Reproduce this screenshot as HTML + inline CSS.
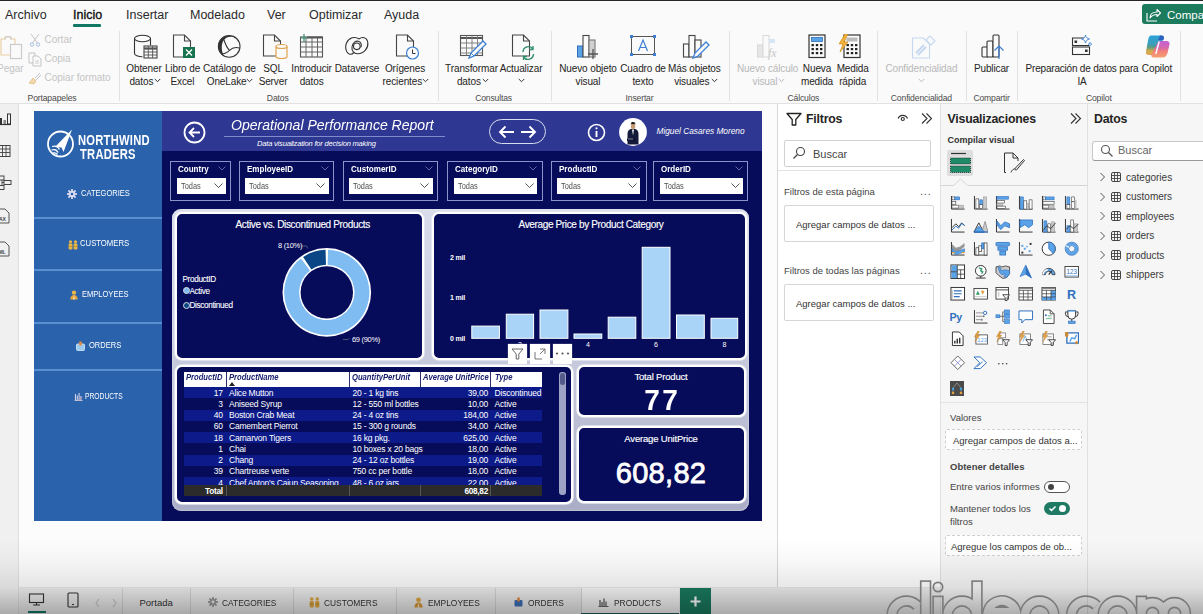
<!DOCTYPE html>
<html><head><meta charset="utf-8">
<style>
*{box-sizing:border-box;margin:0;padding:0}
html,body{width:1203px;height:614px;overflow:hidden;background:#fcfcfc;font-family:"Liberation Sans",sans-serif;color:#252423}
.a{position:absolute}
.t{position:absolute;white-space:nowrap;line-height:1}
#topline{left:0;top:0;width:1203px;height:1.4px;background:#262626}
#menu{left:0;top:2px;width:1203px;height:26px;background:#fafafa}
.mi{font-size:12.5px;color:#2a2a2a;top:6.5px}
#ribbon{left:0;top:28px;width:1203px;height:76px;background:#fafafa;border-bottom:1px solid #e1e1e1}
.rl{font-size:10.5px;color:#252423;text-align:center;line-height:13px}
.gl{font-size:9.5px;color:#444;top:93px}
.sep{width:1px;background:#e0e0e0;top:33px;height:70px}
.dis{color:#bdbdbd}
/* report */
#report{left:34px;top:111px;width:728px;height:410px;background:#060c5a;overflow:hidden}
#side{left:0;top:0;width:128px;height:410px;background:#2a62ac}
.navsep{left:0;width:128px;height:2px;background:#5a8fd2}
.nav{font-size:10px;color:#fff;left:0;width:128px;text-align:center}
#hdr{left:128px;top:0;width:600px;height:40px;background:#2e3592}
</style></head><body>
<div class="a" id="topline"></div>
<div class="a" id="menu">
  <div class="t mi" style="left:5px">Archivo</div>
  <div class="t mi" style="left:73px;color:#111;-webkit-text-stroke:0.35px #111">Inicio</div>
  <div class="a" style="left:73px;top:22px;width:28px;height:3px;background:#117865;border-radius:1px"></div>
  <div class="t mi" style="left:126px">Insertar</div>
  <div class="t mi" style="left:190px">Modelado</div>
  <div class="t mi" style="left:267px">Ver</div>
  <div class="t mi" style="left:309px">Optimizar</div>
  <div class="t mi" style="left:384px">Ayuda</div>
  <div class="a" style="left:1142px;top:2px;width:70px;height:20px;background:#1c7a5d;border-radius:3px"></div>
  <svg class="a" style="left:1146px;top:6px" width="15" height="14" viewBox="0 0 15 14"><path d="M1 5v8h10" fill="none" stroke="#fff" stroke-width="1.1"/><path d="M4 10c0-4 3-6 7-6V1.5l3.5 3.5L11 8.5V6.5c-3 0-5 1-7 3.5z" fill="none" stroke="#fff" stroke-width="1.1" stroke-linejoin="round"/></svg>
<div class="t" style="left:1167px;top:7.5px;font-size:11.5px;color:#fff">Compartir</div>
</div>
<div class="a" id="ribbon"></div>
<div class="a" style="left:118.5px;top:31px;width:1px;height:70px;background:#e1e1e1"></div>
<div class="a" style="left:437.8px;top:31px;width:1px;height:70px;background:#e1e1e1"></div>
<div class="a" style="left:550.5px;top:31px;width:1px;height:70px;background:#e1e1e1"></div>
<div class="a" style="left:729.3px;top:31px;width:1px;height:70px;background:#e1e1e1"></div>
<div class="a" style="left:877.4px;top:31px;width:1px;height:70px;background:#e1e1e1"></div>
<div class="a" style="left:965.7px;top:31px;width:1px;height:70px;background:#e1e1e1"></div>
<div class="a" style="left:1016.6px;top:31px;width:1px;height:70px;background:#e1e1e1"></div>
<div class="a" style="left:1180.2px;top:31px;width:1px;height:70px;background:#e1e1e1"></div>
<div class="t" style="left:2px;width:100px;text-align:center;top:93.8px;font-size:8.6px;letter-spacing:-0.15px;color:#4a4a4a">Portapapeles</div>
<div class="t" style="left:227.7px;width:100px;text-align:center;top:93.8px;font-size:8.6px;letter-spacing:-0.15px;color:#4a4a4a">Datos</div>
<div class="t" style="left:443.6px;width:100px;text-align:center;top:93.8px;font-size:8.6px;letter-spacing:-0.15px;color:#4a4a4a">Consultas</div>
<div class="t" style="left:589.5px;width:100px;text-align:center;top:93.8px;font-size:8.6px;letter-spacing:-0.15px;color:#4a4a4a">Insertar</div>
<div class="t" style="left:753.4px;width:100px;text-align:center;top:93.8px;font-size:8.6px;letter-spacing:-0.15px;color:#4a4a4a">Cálculos</div>
<div class="t" style="left:871.4px;width:100px;text-align:center;top:93.8px;font-size:8.6px;letter-spacing:-0.15px;color:#4a4a4a">Confidencialidad</div>
<div class="t" style="left:941.6px;width:100px;text-align:center;top:93.8px;font-size:8.6px;letter-spacing:-0.15px;color:#4a4a4a">Compartir</div>
<div class="t" style="left:1048.8px;width:100px;text-align:center;top:93.8px;font-size:8.6px;letter-spacing:-0.15px;color:#4a4a4a">Copilot</div>
<svg class="a" style="left:0;top:34px" width="24" height="27" viewBox="0 0 24 27"><path d="M1 5h4v-2h6v2h4v16H1z" fill="none" stroke="#e9cfa6" stroke-width="1.2"/><path d="M5 5.5a3 3 0 0 1 6 0" fill="none" stroke="#ccc" stroke-width="1.2"/><rect x="10.5" y="10.5" width="11" height="14" fill="#fafafa" stroke="#ccc" stroke-width="1.2"/></svg>
<div class="t" style="left:-3px;top:63.5px;font-size:10px;color:#c4c4c4">Pegar</div>
<svg class="a" style="left:29px;top:33px" width="12" height="14" viewBox="0 0 12 14"><path d="M2 1l6.5 9M10 1L3.5 10" stroke="#c4c4c4" stroke-width="1"/><circle cx="3" cy="11.5" r="1.7" fill="none" stroke="#a8bde0" stroke-width="1"/><circle cx="9" cy="11.5" r="1.7" fill="none" stroke="#a8bde0" stroke-width="1"/></svg>
<div class="t" style="left:44.5px;top:34.5px;font-size:10px;color:#c4c4c4">Cortar</div>
<svg class="a" style="left:28px;top:52px" width="14" height="15" viewBox="0 0 14 15"><path d="M1 1h6l0 0v10H1z" fill="none" stroke="#c4c4c4" stroke-width="1"/><path d="M5 4h5l3 3v7H5z" fill="#fafafa" stroke="#c4c4c4" stroke-width="1"/><path d="M7 9h4M7 11h4" stroke="#c4c4c4" stroke-width="0.8"/></svg>
<div class="t" style="left:44.5px;top:54px;font-size:10px;color:#c4c4c4">Copia</div>
<svg class="a" style="left:28px;top:71px" width="14" height="14" viewBox="0 0 14 14"><path d="M1 12l4-5 3 3-2 3z" fill="#f1d7ad" stroke="#e5c089" stroke-width="0.8"/><path d="M7 7l5-5M8 9l5-5" stroke="#c4c4c4" stroke-width="1"/></svg>
<div class="t" style="left:44.5px;top:73px;font-size:10px;color:#c4c4c4">Copiar formato</div>
<svg class="a" style="left:133px;top:34px" width="26" height="26" viewBox="0 0 26 26"><ellipse cx="9.5" cy="4.5" rx="8" ry="3.2" fill="none" stroke="#333" stroke-width="1.1"/><path d="M1.5 4.5v15c0 1.8 3.6 3.2 8 3.2" fill="none" stroke="#333" stroke-width="1.1"/><path d="M17.5 4.5v7" stroke="#333" stroke-width="1.1"/><rect x="11" y="12" width="13" height="12" fill="#fafafa" stroke="#444" stroke-width="1.1"/><path d="M11 14.5h13" stroke="#555" stroke-width="2.2"/><path d="M11 18h13M11 21h13M15.3 12v12M19.6 12v12" stroke="#555" stroke-width="0.9"/></svg>
<div class="t" style="left:84px;width:120px;text-align:center;top:63.5px;font-size:10px;letter-spacing:-0.12px;color:#252423">Obtener</div>
<div class="t" style="left:84px;width:120px;text-align:center;top:76.5px;font-size:10px;letter-spacing:-0.12px;color:#252423">datos&nbsp;&nbsp;</div>
<svg class="a" style="left:154px;top:78px" width="7" height="5" viewBox="0 0 7 5"><path d="M0.8 1l2.7 2.7L6.2 1" fill="none" stroke="#333" stroke-width="1"/></svg>
<svg class="a" style="left:172px;top:34px" width="26" height="26" viewBox="0 0 26 26"><path d="M1.5 1h11l6 6v16H1.5z" fill="#fafafa" stroke="#444" stroke-width="1.1"/><path d="M12.5 1v6h6" fill="none" stroke="#444" stroke-width="1.1"/><rect x="11" y="13" width="12" height="11" fill="#17744f"/><path d="M14 15.5l6 6M20 15.5l-6 6" stroke="#fff" stroke-width="1.4"/></svg>
<div class="t" style="left:122.5px;width:120px;text-align:center;top:63.5px;font-size:10px;letter-spacing:-0.12px;color:#252423">Libro de</div>
<div class="t" style="left:122.5px;width:120px;text-align:center;top:76.5px;font-size:10px;letter-spacing:-0.12px;color:#252423">Excel</div>
<svg class="a" style="left:217px;top:34px" width="25" height="25" viewBox="0 0 25 25"><circle cx="12.2" cy="12.4" r="10.8" fill="none" stroke="#333" stroke-width="1.1"/><path d="M6 3.8C2 6 0.8 10 1.5 14c0.8 4 3 6.5 5 7.5C4.5 17 4 10.5 6.5 6.5 8.5 3.5 11.5 2.2 15 2.8 12.8 0.8 8.8 1.5 6 3.8z" fill="#333"/><path d="M6.8 5.5C8.3 10 10 14 12.5 16.3c2.5-2.5 6-3.5 10-2.3M4.5 19.8c3 0 6-1.5 8-3.5" fill="none" stroke="#333" stroke-width="1.1"/></svg>
<div class="t" style="left:169.3px;width:120px;text-align:center;top:63.5px;font-size:10px;letter-spacing:-0.12px;color:#252423">Catálogo de</div>
<div class="t" style="left:169.3px;width:120px;text-align:center;top:76.5px;font-size:10px;letter-spacing:-0.12px;color:#252423">OneLake&nbsp;&nbsp;</div>
<svg class="a" style="left:246px;top:78px" width="7" height="5" viewBox="0 0 7 5"><path d="M0.8 1l2.7 2.7L6.2 1" fill="none" stroke="#333" stroke-width="1"/></svg>
<svg class="a" style="left:262px;top:34px" width="26" height="26" viewBox="0 0 26 26"><path d="M1.5 1h11l6 6v15H1.5z" fill="#fafafa" stroke="#444" stroke-width="1.1"/><path d="M12.5 1v6h6" fill="none" stroke="#444" stroke-width="1.1"/><path d="M14 12.5v10c0 1.2 2 2 5.5 2s5.5-0.8 5.5-2v-10" fill="#fafafa" stroke="#e0a34e" stroke-width="1.2"/><ellipse cx="19.5" cy="12.5" rx="5.5" ry="2" fill="#fafafa" stroke="#e0a34e" stroke-width="1.2"/></svg>
<div class="t" style="left:213px;width:120px;text-align:center;top:63.5px;font-size:10px;letter-spacing:-0.12px;color:#252423">SQL</div>
<div class="t" style="left:213px;width:120px;text-align:center;top:76.5px;font-size:10px;letter-spacing:-0.12px;color:#252423">Server</div>
<svg class="a" style="left:299px;top:34px" width="26" height="25" viewBox="0 0 26 25"><rect x="1.5" y="3" width="22" height="20" fill="none" stroke="#555" stroke-width="1.1"/><path d="M1.5 8h22M1.5 13h22M1.5 18h22M7 3v20M13 3v20M18.5 3v20" stroke="#666" stroke-width="1"/><path d="M8 3.5h15.5" stroke="#555" stroke-width="2"/><path d="M5 0v8M1 4h8" stroke="#3b8a6e" stroke-width="1.2"/></svg>
<div class="t" style="left:251.60000000000002px;width:120px;text-align:center;top:63.5px;font-size:10px;letter-spacing:-0.12px;color:#252423">Introducir</div>
<div class="t" style="left:251.60000000000002px;width:120px;text-align:center;top:76.5px;font-size:10px;letter-spacing:-0.12px;color:#252423">datos</div>
<svg class="a" style="left:345px;top:36px" width="25" height="20" viewBox="0 0 25 20"><path d="M14 3C10 0 4 1.5 1.5 7-0.5 12 1.5 18 5.5 18.3 7 18.5 8 17.5 9 16.5" fill="none" stroke="#333" stroke-width="1.1"/><path d="M14 3c3-2.5 8-2 8.8 3.5 0.7 5.5-3.8 11-9.8 11.3-4 0.2-6.5-2.8-6-6.8 0.5-4.5 4-6.5 6.5-5.7 2.5 0.7 3.8 3.7 2 6.2" fill="none" stroke="#333" stroke-width="1.1"/><circle cx="11.8" cy="10.3" r="3.3" fill="none" stroke="#333" stroke-width="1.1"/></svg>
<div class="t" style="left:297px;width:120px;text-align:center;top:63.5px;font-size:10px;letter-spacing:-0.12px;color:#252423">Dataverse</div>
<svg class="a" style="left:395px;top:34px" width="26" height="27" viewBox="0 0 26 27"><path d="M1.5 1h11l6 6v15H1.5z" fill="#fafafa" stroke="#444" stroke-width="1.1"/><path d="M12.5 1v6h6" fill="none" stroke="#444" stroke-width="1.1"/><circle cx="17.5" cy="19" r="6" fill="#fafafa" stroke="#3c7fd4" stroke-width="1.2"/><path d="M17.5 15.5v4h3" fill="none" stroke="#333" stroke-width="1"/></svg>
<div class="t" style="left:345px;width:120px;text-align:center;top:63.5px;font-size:10px;letter-spacing:-0.12px;color:#252423">Orígenes</div>
<div class="t" style="left:345px;width:120px;text-align:center;top:76.5px;font-size:10px;letter-spacing:-0.12px;color:#252423">recientes&nbsp;&nbsp;</div>
<svg class="a" style="left:422px;top:78px" width="7" height="5" viewBox="0 0 7 5"><path d="M0.8 1l2.7 2.7L6.2 1" fill="none" stroke="#333" stroke-width="1"/></svg>
<svg class="a" style="left:459px;top:34px" width="28" height="26" viewBox="0 0 28 26"><rect x="1.5" y="1.5" width="22" height="20" fill="none" stroke="#555" stroke-width="1.1"/><path d="M1.5 4h22" stroke="#555" stroke-width="2"/><path d="M1.5 9h22M1.5 14h22M1.5 19h22M7.5 1.5v20M13 1.5v20M18.5 1.5v20" stroke="#777" stroke-width="0.9"/><path d="M10 24l2-5 12-12 3 3-12 12z" fill="#fafafa" stroke="#3c7fd4" stroke-width="1.3"/><path d="M12 19l3 3" stroke="#3c7fd4" stroke-width="1"/></svg>
<div class="t" style="left:411.5px;width:120px;text-align:center;top:63.5px;font-size:10px;letter-spacing:-0.12px;color:#252423">Transformar</div>
<div class="t" style="left:411.5px;width:120px;text-align:center;top:76.5px;font-size:10px;letter-spacing:-0.12px;color:#252423">datos&nbsp;&nbsp;</div>
<svg class="a" style="left:482px;top:78px" width="7" height="5" viewBox="0 0 7 5"><path d="M0.8 1l2.7 2.7L6.2 1" fill="none" stroke="#333" stroke-width="1"/></svg>
<svg class="a" style="left:511px;top:34px" width="26" height="27" viewBox="0 0 26 27"><path d="M1.5 1h11l6 6v15H1.5z" fill="#fafafa" stroke="#444" stroke-width="1.1"/><path d="M12.5 1v6h6" fill="none" stroke="#444" stroke-width="1.1"/><path d="M12 18a5.5 5.5 0 0 1 10-3M22.5 20a5.5 5.5 0 0 1-10 3" fill="none" stroke="#2f8f6a" stroke-width="1.4"/><path d="M22 12v3.5h-3.5M12.5 26v-3.5H16" fill="none" stroke="#2f8f6a" stroke-width="1.3"/></svg>
<div class="t" style="left:461px;width:120px;text-align:center;top:63.5px;font-size:10px;letter-spacing:-0.12px;color:#252423">Actualizar</div>
<svg class="a" style="left:518px;top:78px" width="7" height="5" viewBox="0 0 7 5"><path d="M0.8 1l2.7 2.7L6.2 1" fill="none" stroke="#333" stroke-width="1"/></svg>
<svg class="a" style="left:576px;top:34px" width="26" height="26" viewBox="0 0 26 26"><rect x="1.5" y="12" width="5.5" height="11" fill="#5aa2e6" stroke="#2f6fbd" stroke-width="1"/><rect x="7" y="1.5" width="6" height="21.5" fill="#fafafa" stroke="#444" stroke-width="1.1"/><rect x="13" y="6" width="6" height="17" fill="#d0d0d0" stroke="#777" stroke-width="1.1"/><path d="M17 15v10M12 20h10" stroke="#555" stroke-width="1.3"/></svg>
<div class="t" style="left:528px;width:120px;text-align:center;top:63.5px;font-size:10px;letter-spacing:-0.12px;color:#252423">Nuevo objeto</div>
<div class="t" style="left:528px;width:120px;text-align:center;top:76.5px;font-size:10px;letter-spacing:-0.12px;color:#252423">visual</div>
<svg class="a" style="left:629px;top:34px" width="28" height="23" viewBox="0 0 28 23"><rect x="2.5" y="2.5" width="23" height="18" fill="none" stroke="#555" stroke-width="1"/><rect x="1" y="1" width="3" height="3" fill="#3c7fd4"/><rect x="24" y="1" width="3" height="3" fill="#3c7fd4"/><rect x="1" y="19" width="3" height="3" fill="#3c7fd4"/><rect x="24" y="19" width="3" height="3" fill="#3c7fd4"/><path d="M9.5 17l4.5-11 4.5 11M11 13.5h6" fill="none" stroke="#3c7fd4" stroke-width="1.2"/></svg>
<div class="t" style="left:583px;width:120px;text-align:center;top:63.5px;font-size:10px;letter-spacing:-0.12px;color:#252423">Cuadro de</div>
<div class="t" style="left:583px;width:120px;text-align:center;top:76.5px;font-size:10px;letter-spacing:-0.12px;color:#252423">texto</div>
<svg class="a" style="left:682px;top:34px" width="28" height="26" viewBox="0 0 28 26"><rect x="1.5" y="10" width="5.5" height="13" fill="#fafafa" stroke="#444" stroke-width="1.1"/><rect x="7" y="1.5" width="6" height="21.5" fill="#fafafa" stroke="#444" stroke-width="1.1"/><rect x="13" y="6" width="6" height="17" fill="#fafafa" stroke="#444" stroke-width="1.1"/><path d="M11 24l2-5 11-11 3 3-11 11z" fill="#fafafa" stroke="#3c7fd4" stroke-width="1.3"/></svg>
<div class="t" style="left:634.4px;width:120px;text-align:center;top:63.5px;font-size:10px;letter-spacing:-0.12px;color:#252423">Más objetos</div>
<div class="t" style="left:634.4px;width:120px;text-align:center;top:76.5px;font-size:10px;letter-spacing:-0.12px;color:#252423">visuales&nbsp;&nbsp;</div>
<svg class="a" style="left:711px;top:78px" width="7" height="5" viewBox="0 0 7 5"><path d="M0.8 1l2.7 2.7L6.2 1" fill="none" stroke="#333" stroke-width="1"/></svg>
<svg class="a" style="left:756px;top:34px" width="26" height="26" viewBox="0 0 26 26"><rect x="1.5" y="11" width="5.5" height="12" fill="#e6e6e6" stroke="#d8d8d8" stroke-width="1"/><rect x="7" y="1.5" width="6" height="21.5" fill="#fafafa" stroke="#d8d8d8" stroke-width="1"/><rect x="13" y="5" width="6" height="4" fill="#d6e6f7"/><text x="12" y="23" font-family="Liberation Serif" font-style="italic" font-size="12" fill="#c8c8c8">fx</text></svg>
<div class="t" style="left:707.6px;width:120px;text-align:center;top:63.5px;font-size:10px;letter-spacing:-0.12px;color:#b8b8b8">Nuevo cálculo</div>
<div class="t" style="left:707.6px;width:120px;text-align:center;top:76.5px;font-size:10px;letter-spacing:-0.12px;color:#b8b8b8">visual&nbsp;&nbsp;</div>
<svg class="a" style="left:778px;top:78px" width="7" height="5" viewBox="0 0 7 5"><path d="M0.8 1l2.7 2.7L6.2 1" fill="none" stroke="#b8b8b8" stroke-width="1"/></svg>
<svg class="a" style="left:808px;top:34px" width="18" height="25" viewBox="0 0 18 25"><rect x="1" y="1" width="16" height="22.5" fill="#fafafa" stroke="#333" stroke-width="1.2"/><rect x="3.5" y="3.5" width="11" height="4" fill="#5aa2e6" stroke="#2f6fbd" stroke-width="0.8"/><g fill="#222"><rect x="3.5" y="10" width="2.4" height="2.2"/><rect x="7.8" y="10" width="2.4" height="2.2"/><rect x="12" y="10" width="2.4" height="2.2"/><rect x="3.5" y="14" width="2.4" height="2.2"/><rect x="7.8" y="14" width="2.4" height="2.2"/><rect x="12" y="14" width="2.4" height="2.2"/><rect x="3.5" y="18" width="2.4" height="2.2"/><rect x="7.8" y="18" width="2.4" height="2.2"/><rect x="12" y="18" width="2.4" height="2.2"/></g></svg>
<div class="t" style="left:757px;width:120px;text-align:center;top:63.5px;font-size:10px;letter-spacing:-0.12px;color:#252423">Nueva</div>
<div class="t" style="left:757px;width:120px;text-align:center;top:76.5px;font-size:10px;letter-spacing:-0.12px;color:#252423">medida</div>
<svg class="a" style="left:838px;top:34px" width="24" height="25" viewBox="0 0 24 25"><rect x="6" y="1" width="16" height="22.5" fill="#fafafa" stroke="#333" stroke-width="1.2"/><rect x="8.5" y="3.5" width="11" height="4" fill="#bbb"/><g fill="#222"><rect x="8.5" y="10" width="2.4" height="2.2"/><rect x="12.8" y="10" width="2.4" height="2.2"/><rect x="17" y="10" width="2.4" height="2.2"/><rect x="8.5" y="14" width="2.4" height="2.2"/><rect x="12.8" y="14" width="2.4" height="2.2"/><rect x="17" y="14" width="2.4" height="2.2"/><rect x="8.5" y="18" width="2.4" height="2.2"/><rect x="12.8" y="18" width="2.4" height="2.2"/><rect x="17" y="18" width="2.4" height="2.2"/></g><path d="M7 0L1 10h4l-3 8 8-10H6l4-8z" fill="#f0b23c" stroke="#d18e1a" stroke-width="0.7"/></svg>
<div class="t" style="left:792.7px;width:120px;text-align:center;top:63.5px;font-size:10px;letter-spacing:-0.12px;color:#252423">Medida</div>
<div class="t" style="left:792.7px;width:120px;text-align:center;top:76.5px;font-size:10px;letter-spacing:-0.12px;color:#252423">rápida</div>
<svg class="a" style="left:911px;top:34px" width="26" height="26" viewBox="0 0 26 26"><path d="M1.5 4h11l6 6v14H1.5z" fill="#fafafa" stroke="#c4d8ef" stroke-width="1.1"/><path d="M5 19l8-8M7 21l8-8" stroke="#c4d8ef" stroke-width="2"/><path d="M15 6l4-4 5 5-4 4z" fill="#fafafa" stroke="#c4d8ef" stroke-width="1.1"/></svg>
<div class="t" style="left:861.4px;width:120px;text-align:center;top:63.5px;font-size:10px;letter-spacing:-0.12px;color:#b8b8b8">Confidencialidad</div>
<svg class="a" style="left:918px;top:78px" width="7" height="5" viewBox="0 0 7 5"><path d="M0.8 1l2.7 2.7L6.2 1" fill="none" stroke="#b8b8b8" stroke-width="1"/></svg>
<svg class="a" style="left:981px;top:34px" width="25" height="26" viewBox="0 0 25 26"><rect x="1" y="13" width="6" height="10" rx="1" fill="#fafafa" stroke="#333" stroke-width="1.1"/><rect x="6" y="7" width="6" height="16" rx="1" fill="#fafafa" stroke="#333" stroke-width="1.1"/><rect x="12" y="1" width="6" height="22" rx="1" fill="#fafafa" stroke="#333" stroke-width="1.1"/><path d="M18 25V12M13.5 16.5l4.5-4.5 4.5 4.5" fill="none" stroke="#3c7fd4" stroke-width="1.2"/></svg>
<div class="t" style="left:931.5px;width:120px;text-align:center;top:63.5px;font-size:10px;letter-spacing:-0.12px;color:#252423">Publicar</div>
<svg class="a" style="left:1071px;top:34px" width="24" height="22" viewBox="0 0 24 22"><path d="M13 4H1.5v7.5H18" fill="none" stroke="#333" stroke-width="1.1"/><rect x="1.5" y="13" width="17" height="7.5" fill="none" stroke="#333" stroke-width="1.1"/><rect x="3.5" y="6.5" width="2.6" height="2.5" fill="#333"/><rect x="14" y="15.5" width="2.6" height="2.5" fill="#333"/><path d="M14.5 1c0.6 2.6 1.4 3.4 4 4-2.6 0.6-3.4 1.4-4 4-0.6-2.6-1.4-3.4-4-4 2.6-0.6 3.4-1.4 4-4z" fill="#fafafa" stroke="#3c7fd4" stroke-width="0.9"/><path d="M19 8.3c0.3 1.2 0.7 1.6 1.9 1.9-1.2 0.3-1.6 0.7-1.9 1.9-0.3-1.2-0.7-1.6-1.9-1.9 1.2-0.3 1.6-0.7 1.9-1.9z" fill="#fafafa" stroke="#3c7fd4" stroke-width="0.8"/></svg>
<div class="t" style="left:1022px;width:120px;text-align:center;top:63.5px;font-size:10px;letter-spacing:-0.2px;color:#252423">Preparación de datos para</div>
<div class="t" style="left:1022px;width:120px;text-align:center;top:76.5px;font-size:10px;letter-spacing:-0.12px;color:#252423">IA</div>
<svg class="a" style="left:1144.5px;top:35px" width="25" height="23" viewBox="0 0 25 23"><defs><linearGradient id="cp1" x1="0" y1="0" x2="0" y2="1"><stop offset="0" stop-color="#2aa3d8"/><stop offset="0.45" stop-color="#3c9fb8"/><stop offset="0.6" stop-color="#5a9a80"/><stop offset="0.8" stop-color="#d5ad4c"/><stop offset="1" stop-color="#e0a050"/></linearGradient><linearGradient id="cp2" x1="0" y1="0" x2="0" y2="1"><stop offset="0" stop-color="#c35fd6"/><stop offset="0.45" stop-color="#d86aa8"/><stop offset="0.6" stop-color="#f07f7a"/><stop offset="1" stop-color="#f5a070"/></linearGradient></defs>
<path d="M6 0.5h10c2 0 3 1.2 2.5 3L14 17c-0.7 2.2-2 3-4 3H4c-2.2 0-3.6-1.4-3-3.6L3 5.5C3.7 2 4.5 0.5 6 0.5z" fill="url(#cp1)"/>
<path d="M15 0.5h1.5c1.8 0 2.8 1 2.4 2.8L18.5 5H13z" fill="#2b62c0"/>
<path d="M13.5 6h8c2.2 0 3.5 1.4 3 3.6L22.5 18c-0.7 2.6-2.3 4.5-5 4.5H8.5c-2 0-2.6-1.6-2-3.2z" fill="url(#cp2)"/>
<path d="M14.2 6.5L10.8 19" stroke="#fff" stroke-width="1.4"/></svg>
<div class="t" style="left:1097px;width:120px;text-align:center;top:63.5px;font-size:10px;letter-spacing:-0.12px;color:#252423">Copilot</div>



<div class="a" style="left:34px;top:111px;width:728px;height:410px;background:#060c5a"></div>
<div class="a" style="left:34px;top:111px;width:128px;height:410px;background:#2a62ac"></div>
<div class="a" style="left:162px;top:111px;width:600px;height:39.8px;background:#2e3791"></div>
<!-- sidebar -->
<div class="a" style="left:34px;top:217px;width:128px;height:2px;background:#5a8fd2"></div>
<div class="a" style="left:34px;top:269px;width:128px;height:2px;background:#5a8fd2"></div>
<div class="a" style="left:34px;top:322px;width:128px;height:2px;background:#5a8fd2"></div>
<div class="a" style="left:34px;top:369px;width:128px;height:2px;background:#5a8fd2"></div>
<svg class="a" style="left:46px;top:128px" width="32" height="32" viewBox="0 0 32 32">
 <circle cx="14.5" cy="16" r="12.5" fill="none" stroke="#fff" stroke-width="1.8"/>
 <path d="M9 19 L26 1.5 L17.5 24 L15.5 19.5 Z" fill="#fff"/>
 <path d="M6 18.5c3-1 6 0 7.5 3M5.5 22c3-1 5.5 0 6.5 2.5M7 25c2-0.5 3.5 0.3 4.5 1.5" fill="none" stroke="#fff" stroke-width="1.3"/>
</svg>
<div class="t" style="left:77.5px;top:132.5px;font-size:14px;font-weight:bold;color:#fff;letter-spacing:0.3px;transform:scaleX(0.8);transform-origin:left">NORTHWIND</div>
<div class="t" style="left:79.5px;top:147px;font-size:14px;font-weight:bold;color:#fff;letter-spacing:0.3px;transform:scaleX(0.8);transform-origin:left">TRADERS</div>
<div class="t" style="left:80.5px;top:189px;font-size:9.3px;color:#fff;transform:scaleX(0.81);transform-origin:left">CATEGORIES</div>
<svg class="a" style="left:67px;top:189px" width="10" height="10" viewBox="0 0 10 10"><g fill="#dcdcf2"><circle cx="5" cy="5" r="3.2"/><rect x="4.1" y="0" width="1.8" height="2.2" transform="rotate(0 5 5)"/><rect x="4.1" y="0" width="1.8" height="2.2" transform="rotate(45 5 5)"/><rect x="4.1" y="0" width="1.8" height="2.2" transform="rotate(90 5 5)"/><rect x="4.1" y="0" width="1.8" height="2.2" transform="rotate(135 5 5)"/><rect x="4.1" y="0" width="1.8" height="2.2" transform="rotate(180 5 5)"/><rect x="4.1" y="0" width="1.8" height="2.2" transform="rotate(225 5 5)"/><rect x="4.1" y="0" width="1.8" height="2.2" transform="rotate(270 5 5)"/><rect x="4.1" y="0" width="1.8" height="2.2" transform="rotate(315 5 5)"/></g><circle cx="5" cy="5" r="1.3" fill="#2a62ac"/></svg>
<div class="t" style="left:80px;top:239px;font-size:9.3px;color:#fff;transform:scaleX(0.83);transform-origin:left">CUSTOMERS</div>
<svg class="a" style="left:67.5px;top:239.5px" width="10" height="10" viewBox="0 0 10 10"><g fill="#e9b748"><circle cx="2.5" cy="1.8" r="1.6"/><circle cx="7.5" cy="1.8" r="1.6"/><rect x="0.6" y="3.6" width="3.8" height="6" rx="1"/><rect x="5.6" y="3.6" width="3.8" height="6" rx="1"/></g><path d="M0.8 6.5h3.4M5.8 6.5h3.4" stroke="#a67a20" stroke-width="0.6"/></svg>
<div class="t" style="left:82px;top:290px;font-size:9.3px;color:#fff;transform:scaleX(0.81);transform-origin:left">EMPLOYEES</div>
<svg class="a" style="left:69.5px;top:290px" width="8" height="10" viewBox="0 0 8 10"><circle cx="4" cy="2.6" r="2.2" fill="#e9b748"/><path d="M0.3 9.5c0-3 1.5-4.5 3.7-4.5s3.7 1.5 3.7 4.5z" fill="#e9a53a"/><path d="M4 5l-0.6 4.5h1.2z" fill="#fff"/></svg>
<div class="t" style="left:89px;top:341px;font-size:9.3px;color:#fff;transform:scaleX(0.81);transform-origin:left">ORDERS</div>
<svg class="a" style="left:76px;top:340.5px" width="9" height="10" viewBox="0 0 9 10"><rect x="0.5" y="3" width="8" height="6.5" rx="1" fill="#9ccbf2" stroke="#d9ecfb" stroke-width="0.8"/><rect x="3.2" y="0.5" width="2.6" height="4" fill="#e58a3c"/></svg>
<div class="t" style="left:85.2px;top:391.5px;font-size:8.3px;color:#fff;transform:scaleX(0.81);transform-origin:left">PRODUCTS</div>
<svg class="a" style="left:73.5px;top:392px" width="9" height="9" viewBox="0 0 9 9"><path d="M0.5 8.5h8" stroke="#c8c8e0" stroke-width="0.9"/><path d="M1.5 8V2M3.3 8V3.5M5.1 8V1M6.9 8V4" stroke="#d0d0e6" stroke-width="1.1"/><path d="M4.5 8.5l4-3" stroke="#e58a8a" stroke-width="0.6"/></svg>
<!-- header -->
<svg class="a" style="left:183px;top:121px" width="23" height="23" viewBox="0 0 23 23"><circle cx="11.5" cy="11.5" r="10" fill="none" stroke="#fff" stroke-width="1.8"/><path d="M17 11.5H6.5M11 7l-4.5 4.5 4.5 4.5" fill="none" stroke="#fff" stroke-width="1.8"/></svg>
<div class="t" style="left:231px;top:116.5px;font-size:15.5px;font-style:italic;color:#fff;transform:scaleX(0.905);transform-origin:left">Operational Performance Report</div>
<div class="a" style="left:224px;top:136px;width:221px;height:1px;background:#7f8ccc"></div>
<div class="t" style="left:257px;top:140px;font-size:7.5px;font-style:italic;color:#fff;letter-spacing:-0.18px">Data visualization for decision making</div>
<div class="a" style="left:489px;top:119px;width:57px;height:25px;border:1.3px solid #d8dcf0;border-radius:13px"></div>
<svg class="a" style="left:497px;top:124px" width="42" height="16" viewBox="0 0 42 16"><path d="M17 8H3M8.5 2.5L3 8l5.5 5.5M24 8h14M32.5 2.5L38 8l-5.5 5.5" fill="none" stroke="#fff" stroke-width="1.9"/></svg>
<svg class="a" style="left:587px;top:123px" width="19" height="19" viewBox="0 0 19 19"><circle cx="9.5" cy="9.5" r="8" fill="none" stroke="#fff" stroke-width="1.6"/><path d="M9.5 8v6" stroke="#fff" stroke-width="1.9"/><circle cx="9.5" cy="5.3" r="1.1" fill="#fff"/></svg>
<svg class="a" style="left:619px;top:118.4px" width="28" height="28" viewBox="0 0 28 28"><circle cx="14" cy="14" r="13.9" fill="#fff"/><path d="M8.5 26.5V16c0-3 1.5-4.5 3.5-5h4c2 0.5 3.5 2 3.5 5v10.5z" fill="#141a3a"/><path d="M13 11.5l1 6 1-6z" fill="#f2f2f2"/><path d="M8 20.5h7l1.5 1.5-1.5 1H8z" fill="#0e1330"/><path d="M9 21h5" stroke="#ddd" stroke-width="0.6"/><rect x="12" y="5" width="4.2" height="6" rx="1.5" fill="#c79a72"/><path d="M11.7 6.8c0-2.3 1-2.8 2.4-2.8s2.4 0.6 2.4 2.8l-0.5-1c-1 0.5-2.5 0.5-3.8 0z" fill="#1c1c1c"/></svg>
<div class="t" style="left:656.5px;top:126.5px;font-size:8.3px;font-style:italic;color:#fff">Miguel Casares Moreno</div>
<div class="a" style="left:170px;top:161px;width:61px;height:40px;border:1px solid #8d93c9"></div>
<div class="t" style="left:178px;top:164.2px;font-size:9.8px;font-weight:bold;color:#fff;transform:scaleX(0.82);transform-origin:left">Country</div>
<svg class="a" style="left:218px;top:166px" width="8" height="5" viewBox="0 0 8 5"><path d="M0.5 0.5l3.5 3.5 3.5-3.5" fill="none" stroke="#6a70b0" stroke-width="0.9"/></svg>
<div class="a" style="left:177px;top:178px;width:49px;height:16px;background:#fff"></div>
<div class="t" style="left:181px;top:182px;font-size:8.6px;color:#505050;transform:scaleX(0.86);transform-origin:left">Todas</div>
<svg class="a" style="left:214px;top:183px" width="9" height="6" viewBox="0 0 9 6"><path d="M0.5 0.5l4 4 4-4" fill="none" stroke="#444" stroke-width="0.9"/></svg>
<div class="a" style="left:239px;top:161px;width:95px;height:40px;border:1px solid #8d93c9"></div>
<div class="t" style="left:247px;top:164.2px;font-size:9.8px;font-weight:bold;color:#fff;transform:scaleX(0.82);transform-origin:left">EmployeeID</div>
<svg class="a" style="left:321px;top:166px" width="8" height="5" viewBox="0 0 8 5"><path d="M0.5 0.5l3.5 3.5 3.5-3.5" fill="none" stroke="#6a70b0" stroke-width="0.9"/></svg>
<div class="a" style="left:245px;top:178px;width:84px;height:16px;background:#fff"></div>
<div class="t" style="left:249px;top:182px;font-size:8.6px;color:#505050;transform:scaleX(0.86);transform-origin:left">Todas</div>
<svg class="a" style="left:316px;top:183px" width="9" height="6" viewBox="0 0 9 6"><path d="M0.5 0.5l4 4 4-4" fill="none" stroke="#444" stroke-width="0.9"/></svg>
<div class="a" style="left:343px;top:161px;width:95px;height:40px;border:1px solid #8d93c9"></div>
<div class="t" style="left:351px;top:164.2px;font-size:9.8px;font-weight:bold;color:#fff;transform:scaleX(0.82);transform-origin:left">CustomerID</div>
<svg class="a" style="left:425px;top:166px" width="8" height="5" viewBox="0 0 8 5"><path d="M0.5 0.5l3.5 3.5 3.5-3.5" fill="none" stroke="#6a70b0" stroke-width="0.9"/></svg>
<div class="a" style="left:349px;top:178px;width:84px;height:16px;background:#fff"></div>
<div class="t" style="left:353px;top:182px;font-size:8.6px;color:#505050;transform:scaleX(0.86);transform-origin:left">Todas</div>
<svg class="a" style="left:420px;top:183px" width="9" height="6" viewBox="0 0 9 6"><path d="M0.5 0.5l4 4 4-4" fill="none" stroke="#444" stroke-width="0.9"/></svg>
<div class="a" style="left:447px;top:161px;width:96px;height:40px;border:1px solid #8d93c9"></div>
<div class="t" style="left:455px;top:164.2px;font-size:9.8px;font-weight:bold;color:#fff;transform:scaleX(0.82);transform-origin:left">CategoryID</div>
<svg class="a" style="left:529px;top:166px" width="8" height="5" viewBox="0 0 8 5"><path d="M0.5 0.5l3.5 3.5 3.5-3.5" fill="none" stroke="#6a70b0" stroke-width="0.9"/></svg>
<div class="a" style="left:454px;top:178px;width:83px;height:16px;background:#fff"></div>
<div class="t" style="left:458px;top:182px;font-size:8.6px;color:#505050;transform:scaleX(0.86);transform-origin:left">Todas</div>
<svg class="a" style="left:525px;top:183px" width="9" height="6" viewBox="0 0 9 6"><path d="M0.5 0.5l4 4 4-4" fill="none" stroke="#444" stroke-width="0.9"/></svg>
<div class="a" style="left:551px;top:161px;width:96px;height:40px;border:1px solid #8d93c9"></div>
<div class="t" style="left:559px;top:164.2px;font-size:9.8px;font-weight:bold;color:#fff;transform:scaleX(0.82);transform-origin:left">ProductID</div>
<svg class="a" style="left:633px;top:166px" width="8" height="5" viewBox="0 0 8 5"><path d="M0.5 0.5l3.5 3.5 3.5-3.5" fill="none" stroke="#6a70b0" stroke-width="0.9"/></svg>
<div class="a" style="left:557px;top:178px;width:83px;height:16px;background:#fff"></div>
<div class="t" style="left:561px;top:182px;font-size:8.6px;color:#505050;transform:scaleX(0.86);transform-origin:left">Todas</div>
<svg class="a" style="left:628px;top:183px" width="9" height="6" viewBox="0 0 9 6"><path d="M0.5 0.5l4 4 4-4" fill="none" stroke="#444" stroke-width="0.9"/></svg>
<div class="a" style="left:653px;top:161px;width:95px;height:40px;border:1px solid #8d93c9"></div>
<div class="t" style="left:661px;top:164.2px;font-size:9.8px;font-weight:bold;color:#fff;transform:scaleX(0.82);transform-origin:left">OrderID</div>
<svg class="a" style="left:735px;top:166px" width="8" height="5" viewBox="0 0 8 5"><path d="M0.5 0.5l3.5 3.5 3.5-3.5" fill="none" stroke="#6a70b0" stroke-width="0.9"/></svg>
<div class="a" style="left:660px;top:178px;width:83px;height:16px;background:#fff"></div>
<div class="t" style="left:664px;top:182px;font-size:8.6px;color:#505050;transform:scaleX(0.86);transform-origin:left">Todas</div>
<svg class="a" style="left:731px;top:183px" width="9" height="6" viewBox="0 0 9 6"><path d="M0.5 0.5l4 4 4-4" fill="none" stroke="#444" stroke-width="0.9"/></svg>
<div class="a" style="left:172px;top:208.5px;width:577px;height:302px;border-radius:9px;background:linear-gradient(to bottom,#d9dcea,#c3c6d9 60%,#a9adc5);box-shadow:inset 0 0 2px #eef0f8"></div>
<div class="a" style="left:174.8px;top:212px;width:249.39999999999998px;height:147.5px;border-radius:7px;border:2.3px solid #fff;background:#060c5a;box-shadow:0 0 0 0.8px #e8eaf4"></div>
<div class="a" style="left:432px;top:212px;width:315px;height:147.5px;border-radius:7px;border:2.3px solid #fff;background:#060c5a;box-shadow:0 0 0 0.8px #e8eaf4"></div>
<div class="a" style="left:174.5px;top:364.5px;width:398.5px;height:139.0px;border-radius:7px;border:2.3px solid #fff;background:#060c5a;box-shadow:0 0 0 0.8px #e8eaf4"></div>
<div class="a" style="left:576.5px;top:365.3px;width:169.79999999999995px;height:52.19999999999999px;border-radius:7px;border:2.3px solid #fff;background:#060c5a;box-shadow:0 0 0 0.8px #e8eaf4"></div>
<div class="a" style="left:576.5px;top:426.3px;width:169.79999999999995px;height:77.0px;border-radius:7px;border:2.3px solid #fff;background:#060c5a;box-shadow:0 0 0 0.8px #e8eaf4"></div>
<div class="t" style="left:235.5px;top:219.5px;font-size:10px;color:#fff;letter-spacing:-0.35px;-webkit-text-stroke:0.15px #fff">Active vs. Discontinued Products</div>
<div class="t" style="left:182.5px;top:275.8px;font-size:8.2px;color:#fff;letter-spacing:-0.35px;-webkit-text-stroke:0.1px #fff">ProductID</div>
<div class="a" style="left:183px;top:287.3px;width:6.8px;height:6.8px;border-radius:4px;background:#7fbaf0;border:1px solid #ddd"></div>
<div class="t" style="left:189.5px;top:287.8px;font-size:8.2px;color:#fff;letter-spacing:-0.35px;-webkit-text-stroke:0.1px #fff">Active</div>
<div class="a" style="left:183px;top:301.8px;width:6.8px;height:6.8px;border-radius:4px;background:#0a4585;border:1px solid #ddd"></div>
<div class="t" style="left:189.5px;top:302.3px;font-size:8.2px;color:#fff;letter-spacing:-0.35px;-webkit-text-stroke:0.1px #fff">Discontinued</div>
<svg class="a" style="left:0;top:0" width="440" height="370" viewBox="0 0 440 370"><circle cx="326.8" cy="292.4" r="44.3" fill="#fff"/><path d="M328.06 249.82A42.599999999999994 42.599999999999994 0 1 1 300.93 258.56L309.98 270.39A27.7 27.7 0 1 0 327.62 264.71Z" fill="#7fbcf2"/><path d="M303.10 257.00A42.599999999999994 42.599999999999994 0 0 1 325.54 249.82L325.98 264.71A27.7 27.7 0 0 0 311.39 269.38Z" fill="#0a4585"/><circle cx="326.8" cy="292.4" r="26.2" fill="#060c5a"/><path d="M301.5 246h5l1.5 2.5" fill="none" stroke="#888" stroke-width="0.6"/><path d="M343 339.5h5l1.5-1.5" fill="none" stroke="#888" stroke-width="0.6"/></svg>
<div class="t" style="left:278px;top:242px;font-size:7.5px;color:#fff;letter-spacing:-0.3px">8 (10%)</div>
<div class="t" style="left:352px;top:336px;font-size:7.5px;color:#fff;letter-spacing:-0.3px">69 (90%)</div>
<div class="t" style="left:518.5px;top:219.5px;font-size:10px;color:#fff;letter-spacing:-0.35px;-webkit-text-stroke:0.15px #fff">Average Price by Product Category</div>
<div class="t" style="left:450px;top:254.0px;font-size:7px;font-weight:bold;color:#fff;letter-spacing:-0.2px">2 mil</div>
<div class="t" style="left:450px;top:294.3px;font-size:7px;font-weight:bold;color:#fff;letter-spacing:-0.2px">1 mil</div>
<div class="t" style="left:450px;top:334.7px;font-size:7px;font-weight:bold;color:#fff;letter-spacing:-0.2px">0 mil</div>
<svg class="a" style="left:0;top:0" width="760" height="370" viewBox="0 0 760 370"><rect x="471.8" y="326.1" width="27.6" height="12.2" fill="#a9d3f7" stroke="#fff" stroke-width="1"/><rect x="506.3" y="314.2" width="27.3" height="24.1" fill="#a9d3f7" stroke="#fff" stroke-width="1"/><rect x="540.0" y="310.0" width="27.9" height="28.3" fill="#a9d3f7" stroke="#fff" stroke-width="1"/><rect x="574.0" y="334.0" width="27.8" height="4.3" fill="#a9d3f7" stroke="#fff" stroke-width="1"/><rect x="608.2" y="317.2" width="27.6" height="21.1" fill="#a9d3f7" stroke="#fff" stroke-width="1"/><rect x="642.2" y="247.3" width="27.8" height="91.0" fill="#a9d3f7" stroke="#fff" stroke-width="1"/><rect x="676.5" y="315.0" width="27.8" height="23.3" fill="#a9d3f7" stroke="#fff" stroke-width="1"/><rect x="711.0" y="318.3" width="26.7" height="20.0" fill="#a9d3f7" stroke="#fff" stroke-width="1"/></svg>
<div class="t" style="left:518.0px;top:341px;font-size:7px;color:#fff">2</div>
<div class="t" style="left:586.0px;top:341px;font-size:7px;color:#fff">4</div>
<div class="t" style="left:654.0px;top:341px;font-size:7px;color:#fff">6</div>
<div class="t" style="left:722.5px;top:341px;font-size:7px;color:#fff">8</div>
<div class="a" style="left:508px;top:344px;width:19px;height:20px;background:#fff;box-shadow:0 0 1px #bbb"></div>
<svg class="a" style="left:511px;top:348px" width="13" height="12" viewBox="0 0 13 12"><path d="M1 1h11l-4.2 5v5h-2.6v-5z" fill="none" stroke="#555" stroke-width="0.9"/></svg>
<div class="a" style="left:530px;top:344px;width:20px;height:20px;background:#fff;box-shadow:0 0 1px #bbb"></div>
<svg class="a" style="left:534px;top:348px" width="12" height="12" viewBox="0 0 12 12"><path d="M1 4v7h7M6 1h5v5M11 1L6 6" fill="none" stroke="#666" stroke-width="0.9"/></svg>
<div class="a" style="left:553px;top:344px;width:19px;height:20px;background:#fff;box-shadow:0 0 1px #bbb"></div>
<svg class="a" style="left:555px;top:352px" width="15" height="3" viewBox="0 0 15 3"><circle cx="2" cy="1.5" r="1.1" fill="#555"/><circle cx="7.5" cy="1.5" r="1.1" fill="#555"/><circle cx="13" cy="1.5" r="1.1" fill="#555"/></svg>
<div class="a" style="left:184px;top:372px;width:358px;height:15px;background:#fff"></div>
<div class="a" style="left:225.6px;top:372px;width:1px;height:123px;background:#2a3070"></div>
<div class="a" style="left:349.0px;top:372px;width:1px;height:123px;background:#2a3070"></div>
<div class="a" style="left:419.8px;top:372px;width:1px;height:123px;background:#2a3070"></div>
<div class="a" style="left:490.4px;top:372px;width:1px;height:123px;background:#2a3070"></div>
<div class="t" style="left:186.4px;top:373.2px;font-size:9.2px;font-style:italic;font-weight:bold;color:#1b2070;transform:scaleX(0.83);transform-origin:left">ProductID</div>
<div class="t" style="left:229.0px;top:373.2px;font-size:9.2px;font-style:italic;font-weight:bold;color:#1b2070;transform:scaleX(0.83);transform-origin:left">ProductName</div>
<div class="t" style="left:352.3px;top:373.2px;font-size:9.2px;font-style:italic;font-weight:bold;color:#1b2070;transform:scaleX(0.83);transform-origin:left">QuantityPerUnit</div>
<div class="t" style="left:422.9px;top:373.2px;font-size:9.2px;font-style:italic;font-weight:bold;color:#1b2070;transform:scaleX(0.83);transform-origin:left">Average UnitPrice</div>
<div class="t" style="left:494.5px;top:373.2px;font-size:9.2px;font-style:italic;font-weight:bold;color:#1b2070;transform:scaleX(0.83);transform-origin:left">Type</div>
<svg class="a" style="left:229px;top:382px" width="6" height="4" viewBox="0 0 6 4"><path d="M0 4L3 0l3 4z" fill="#222"/></svg>
<div class="a" style="left:184px;top:387px;width:358px;height:98px;overflow:hidden"><div class="a" style="left:0;top:0.00px;width:358px;height:11.25px;background:#0c1a8a"></div><div class="t" style="right:319.2px;top:1.60px;font-size:8.5px;color:#fff;letter-spacing:-0.2px">17</div><div class="t" style="left:45px;top:1.60px;font-size:8.5px;color:#fff;letter-spacing:-0.2px">Alice Mutton</div><div class="t" style="left:168.5px;top:1.60px;font-size:8.5px;color:#fff;letter-spacing:-0.2px">20 - 1 kg tins</div><div class="t" style="right:54.0px;top:1.60px;font-size:8.5px;color:#fff;letter-spacing:-0.2px">39,00</div><div class="t" style="left:310.5px;top:1.60px;font-size:8.5px;color:#fff;letter-spacing:-0.2px">Discontinued</div><div class="a" style="left:0;top:11.25px;width:358px;height:11.25px;background:#060c5a"></div><div class="t" style="right:319.2px;top:12.85px;font-size:8.5px;color:#fff;letter-spacing:-0.2px">3</div><div class="t" style="left:45px;top:12.85px;font-size:8.5px;color:#fff;letter-spacing:-0.2px">Aniseed Syrup</div><div class="t" style="left:168.5px;top:12.85px;font-size:8.5px;color:#fff;letter-spacing:-0.2px">12 - 550 ml bottles</div><div class="t" style="right:54.0px;top:12.85px;font-size:8.5px;color:#fff;letter-spacing:-0.2px">10,00</div><div class="t" style="left:310.5px;top:12.85px;font-size:8.5px;color:#fff;letter-spacing:-0.2px">Active</div><div class="a" style="left:0;top:22.50px;width:358px;height:11.25px;background:#0c1a8a"></div><div class="t" style="right:319.2px;top:24.10px;font-size:8.5px;color:#fff;letter-spacing:-0.2px">40</div><div class="t" style="left:45px;top:24.10px;font-size:8.5px;color:#fff;letter-spacing:-0.2px">Boston Crab Meat</div><div class="t" style="left:168.5px;top:24.10px;font-size:8.5px;color:#fff;letter-spacing:-0.2px">24 - 4 oz tins</div><div class="t" style="right:54.0px;top:24.10px;font-size:8.5px;color:#fff;letter-spacing:-0.2px">184,00</div><div class="t" style="left:310.5px;top:24.10px;font-size:8.5px;color:#fff;letter-spacing:-0.2px">Active</div><div class="a" style="left:0;top:33.75px;width:358px;height:11.25px;background:#060c5a"></div><div class="t" style="right:319.2px;top:35.35px;font-size:8.5px;color:#fff;letter-spacing:-0.2px">60</div><div class="t" style="left:45px;top:35.35px;font-size:8.5px;color:#fff;letter-spacing:-0.2px">Camembert Pierrot</div><div class="t" style="left:168.5px;top:35.35px;font-size:8.5px;color:#fff;letter-spacing:-0.2px">15 - 300 g rounds</div><div class="t" style="right:54.0px;top:35.35px;font-size:8.5px;color:#fff;letter-spacing:-0.2px">34,00</div><div class="t" style="left:310.5px;top:35.35px;font-size:8.5px;color:#fff;letter-spacing:-0.2px">Active</div><div class="a" style="left:0;top:45.00px;width:358px;height:11.25px;background:#0c1a8a"></div><div class="t" style="right:319.2px;top:46.60px;font-size:8.5px;color:#fff;letter-spacing:-0.2px">18</div><div class="t" style="left:45px;top:46.60px;font-size:8.5px;color:#fff;letter-spacing:-0.2px">Carnarvon Tigers</div><div class="t" style="left:168.5px;top:46.60px;font-size:8.5px;color:#fff;letter-spacing:-0.2px">16 kg pkg.</div><div class="t" style="right:54.0px;top:46.60px;font-size:8.5px;color:#fff;letter-spacing:-0.2px">625,00</div><div class="t" style="left:310.5px;top:46.60px;font-size:8.5px;color:#fff;letter-spacing:-0.2px">Active</div><div class="a" style="left:0;top:56.25px;width:358px;height:11.25px;background:#060c5a"></div><div class="t" style="right:319.2px;top:57.85px;font-size:8.5px;color:#fff;letter-spacing:-0.2px">1</div><div class="t" style="left:45px;top:57.85px;font-size:8.5px;color:#fff;letter-spacing:-0.2px">Chai</div><div class="t" style="left:168.5px;top:57.85px;font-size:8.5px;color:#fff;letter-spacing:-0.2px">10 boxes x 20 bags</div><div class="t" style="right:54.0px;top:57.85px;font-size:8.5px;color:#fff;letter-spacing:-0.2px">18,00</div><div class="t" style="left:310.5px;top:57.85px;font-size:8.5px;color:#fff;letter-spacing:-0.2px">Active</div><div class="a" style="left:0;top:67.50px;width:358px;height:11.25px;background:#0c1a8a"></div><div class="t" style="right:319.2px;top:69.10px;font-size:8.5px;color:#fff;letter-spacing:-0.2px">2</div><div class="t" style="left:45px;top:69.10px;font-size:8.5px;color:#fff;letter-spacing:-0.2px">Chang</div><div class="t" style="left:168.5px;top:69.10px;font-size:8.5px;color:#fff;letter-spacing:-0.2px">24 - 12 oz bottles</div><div class="t" style="right:54.0px;top:69.10px;font-size:8.5px;color:#fff;letter-spacing:-0.2px">19,00</div><div class="t" style="left:310.5px;top:69.10px;font-size:8.5px;color:#fff;letter-spacing:-0.2px">Active</div><div class="a" style="left:0;top:78.75px;width:358px;height:11.25px;background:#060c5a"></div><div class="t" style="right:319.2px;top:80.35px;font-size:8.5px;color:#fff;letter-spacing:-0.2px">39</div><div class="t" style="left:45px;top:80.35px;font-size:8.5px;color:#fff;letter-spacing:-0.2px">Chartreuse verte</div><div class="t" style="left:168.5px;top:80.35px;font-size:8.5px;color:#fff;letter-spacing:-0.2px">750 cc per bottle</div><div class="t" style="right:54.0px;top:80.35px;font-size:8.5px;color:#fff;letter-spacing:-0.2px">18,00</div><div class="t" style="left:310.5px;top:80.35px;font-size:8.5px;color:#fff;letter-spacing:-0.2px">Active</div><div class="a" style="left:0;top:90.00px;width:358px;height:11.25px;background:#0c1a8a"></div><div class="t" style="right:319.2px;top:91.60px;font-size:8.5px;color:#fff;letter-spacing:-0.2px">4</div><div class="t" style="left:45px;top:91.60px;font-size:8.5px;color:#fff;letter-spacing:-0.2px">Chef Anton's Cajun Seasoning</div><div class="t" style="left:168.5px;top:91.60px;font-size:8.5px;color:#fff;letter-spacing:-0.2px">48 - 6 oz jars</div><div class="t" style="right:54.0px;top:91.60px;font-size:8.5px;color:#fff;letter-spacing:-0.2px">22,00</div><div class="t" style="left:310.5px;top:91.60px;font-size:8.5px;color:#fff;letter-spacing:-0.2px">Active</div></div>
<div class="a" style="left:184px;top:485px;width:358px;height:10.5px;background:#2b2b2b"></div><div class="a" style="left:225.6px;top:485px;width:1px;height:10.5px;background:#555"></div><div class="a" style="left:349px;top:485px;width:1px;height:10.5px;background:#555"></div><div class="a" style="left:419.8px;top:485px;width:1px;height:10.5px;background:#555"></div><div class="a" style="left:490.4px;top:485px;width:1px;height:10.5px;background:#555"></div>
<div class="t" style="left:184px;width:38.8px;text-align:right;top:486.5px;font-size:8.3px;font-weight:bold;color:#fff;letter-spacing:-0.3px">Total</div>
<div class="t" style="left:420px;width:68px;text-align:right;top:486.5px;font-size:8.3px;font-weight:bold;color:#fff;letter-spacing:-0.3px">608,82</div>
<div class="a" style="left:558.5px;top:372px;width:7px;height:123px;background:#9ea3c6;border-radius:3px"></div>
<div class="a" style="left:559.5px;top:373px;width:5px;height:12px;background:#545a8a;border-radius:3px"></div>
<div class="t" style="left:576px;width:170px;text-align:center;top:372px;font-size:9.5px;color:#fff;letter-spacing:-0.18px;-webkit-text-stroke:0.15px #fff">Total Product</div>
<div class="t" style="left:576px;width:170px;text-align:center;top:384.8px;font-size:28px;font-weight:bold;color:#fff;letter-spacing:2.5px;text-indent:2.5px;transform:scaleY(1.08);transform-origin:top">77</div>
<div class="t" style="left:576px;width:170px;text-align:center;top:433.5px;font-size:9.5px;color:#fff;letter-spacing:-0.18px;-webkit-text-stroke:0.15px #fff">Average UnitPrice</div>
<div class="t" style="left:576px;width:170px;text-align:center;top:459px;font-size:29px;color:#fff;letter-spacing:0.3px;-webkit-text-stroke:0.8px #fff">608,82</div>
<!-- left strip -->


<!-- filters pane -->
<div class="a" style="left:777px;top:104px;width:1px;height:484px;background:#d6d6d6"></div>
<div class="a" style="left:778px;top:104px;width:162px;height:484px;background:#ffffff"></div>
<svg class="a" style="left:786px;top:112px" width="16" height="14" viewBox="0 0 16 14"><path d="M1 1.5h14l-5.2 6v5.5h-3.6v-5.5z" fill="none" stroke="#252423" stroke-width="1.3" stroke-linejoin="round"/></svg>
<div class="t" style="left:806px;top:113.2px;font-size:12.3px;font-weight:bold;color:#252423;letter-spacing:-0.2px">Filtros</div>
<svg class="a" style="left:897px;top:113px" width="12" height="10" viewBox="0 0 12 10"><path d="M1.2 5.5C2.5 1.3 9 1.3 10.5 5.5" fill="none" stroke="#333" stroke-width="1.2"/><circle cx="5.8" cy="6" r="1.5" fill="none" stroke="#333" stroke-width="1.2"/></svg>
<svg class="a" style="left:920px;top:112px" width="13" height="13" viewBox="0 0 13 13"><path d="M2 1.5l5 5-5 5M6.5 1.5l5 5-5 5" fill="none" stroke="#333" stroke-width="1.1"/></svg>
<div class="a" style="left:784px;top:140px;width:147px;height:27px;border:1px solid #d1d1d1;background:#fff;border-radius:2px"></div>
<svg class="a" style="left:792px;top:146px" width="14" height="14" viewBox="0 0 14 14"><circle cx="8.5" cy="5.5" r="4" fill="none" stroke="#444" stroke-width="1.1"/><path d="M5.5 8.5L1.5 12.5" stroke="#444" stroke-width="1.2"/></svg>
<div class="t" style="left:813px;top:148.5px;font-size:11px;color:#444">Buscar</div>
<div class="a" style="left:778px;top:170px;width:162px;height:1px;background:#e3e3e3"></div>
<div class="t" style="left:784px;top:187.3px;font-size:9.5px;color:#444">Filtros de esta página</div>
<div class="t" style="left:920px;top:185.5px;font-size:11px;color:#555;letter-spacing:0.8px">...</div>
<div class="a" style="left:784px;top:205px;width:150px;height:37px;border:1px solid #d6d6d6;background:#fff;border-radius:2px"></div>
<div class="t" style="left:796px;top:220.3px;font-size:9.5px;color:#333">Agregar campos de datos ...</div>
<div class="t" style="left:784px;top:266.3px;font-size:9.5px;color:#444">Filtros de todas las páginas</div>
<div class="t" style="left:920px;top:264.5px;font-size:11px;color:#555;letter-spacing:0.8px">...</div>
<div class="a" style="left:784px;top:284px;width:150px;height:37px;border:1px solid #d6d6d6;background:#fff;border-radius:2px"></div>
<div class="t" style="left:796px;top:299.3px;font-size:9.5px;color:#333">Agregar campos de datos ...</div>

<!-- viz pane -->
<div class="a" style="left:940px;top:104px;width:1px;height:510px;background:#e0e0e0"></div>
<div class="a" style="left:941px;top:104px;width:146px;height:510px;background:#f6f6f6"></div>
<div class="t" style="left:947.5px;top:113.2px;font-size:12.3px;font-weight:bold;color:#252423;letter-spacing:-0.2px">Visualizaciones</div>
<svg class="a" style="left:1069px;top:112px" width="13" height="13" viewBox="0 0 13 13"><path d="M2 1.5l5 5-5 5M6.5 1.5l5 5-5 5" fill="none" stroke="#333" stroke-width="1.1"/></svg>
<div class="t" style="left:947.5px;top:136.2px;font-size:9px;font-weight:bold;color:#333">Compilar visual</div>
<div class="a" style="left:947px;top:150px;width:26px;height:25.5px;background:#dedede;border-radius:2px"></div>
<svg class="a" style="left:949px;top:152px" width="23" height="22" viewBox="0 0 23 22"><path d="M2 1.5h15" stroke="#333" stroke-width="1.2"/><rect x="1.5" y="6" width="20" height="6" fill="#1f8a68" stroke="#222" stroke-width="0.8" stroke-dasharray="1 1"/><rect x="1.5" y="14" width="20" height="6.5" fill="#1f8a68" stroke="#222" stroke-width="0.8" stroke-dasharray="1 1"/></svg>
<svg class="a" style="left:1003px;top:152px" width="23" height="22" viewBox="0 0 23 22"><path d="M3 20.5H1.5V1h8.5l5 5v3" fill="none" stroke="#333" stroke-width="1"/><path d="M10 1v5h5" fill="none" stroke="#333" stroke-width="1"/><path d="M8 20.5c1-3 3-4 5-3M11.5 17l9-9.5 1 1-8.5 10" fill="none" stroke="#333" stroke-width="1"/></svg>
<svg class="a" style="left:941px;top:178px" width="146" height="9" viewBox="0 0 146 9"><path d="M0 7.5h12.5l7-6.5 7 6.5H146" fill="none" stroke="#d6d6d6" stroke-width="1"/></svg>

<!-- vizicons -->
<svg class="a" style="left:950.0px;top:195.0px" width="15.5" height="15.5" viewBox="0 0 16 16"><path d="M1.5 1v13.5H15" fill="none" stroke="#333" stroke-width="1"/><rect x="2" y="2" width="3" height="3" fill="#fff" stroke="#333" stroke-width="0.6"/><rect x="5" y="2" width="5" height="3" fill="#5ba3e8" stroke="#2f6fbd" stroke-width="0.6"/><rect x="2" y="6.5" width="4" height="3" fill="#fff" stroke="#333" stroke-width="0.6"/><rect x="2" y="10.5" width="7" height="3" fill="#fff" stroke="#333" stroke-width="0.6"/><rect x="9" y="10.5" width="5" height="3" fill="#c9c9c9" stroke="#999" stroke-width="0.6"/></svg>
<svg class="a" style="left:972.9px;top:195.0px" width="15.5" height="15.5" viewBox="0 0 16 16"><path d="M1.5 1v13.5H15" fill="none" stroke="#333" stroke-width="1"/><rect x="3" y="4" width="3" height="10" fill="#fff" stroke="#333" stroke-width="0.6"/><rect x="7" y="5" width="3" height="5" fill="#5ba3e8" stroke="#2f6fbd" stroke-width="0.6"/><rect x="7" y="10" width="3" height="4" fill="#fff" stroke="#333" stroke-width="0.6"/><rect x="11" y="2" width="3" height="12" fill="#c9c9c9" stroke="#999" stroke-width="0.6"/></svg>
<svg class="a" style="left:995.1px;top:195.0px" width="15.5" height="15.5" viewBox="0 0 16 16"><path d="M1.5 1v13.5H15" fill="none" stroke="#333" stroke-width="1"/><rect x="2" y="1.5" width="12" height="2.8" fill="#5ba3e8" stroke="#2f6fbd" stroke-width="0.6"/><rect x="2" y="5.5" width="8" height="2.8" fill="#fff" stroke="#333" stroke-width="0.6"/><rect x="2" y="9" width="6" height="2.2" fill="#c9c9c9" stroke="#999" stroke-width="0.6"/><rect x="2" y="11.5" width="9" height="2.3" fill="#fff" stroke="#333" stroke-width="0.6"/></svg>
<svg class="a" style="left:1018.0px;top:195.0px" width="15.5" height="15.5" viewBox="0 0 16 16"><path d="M1.5 1v13.5H15" fill="none" stroke="#333" stroke-width="1"/><rect x="2.5" y="2" width="3" height="12.5" fill="#5ba3e8" stroke="#2f6fbd" stroke-width="0.6"/><rect x="6" y="6" width="3" height="8.5" fill="#fff" stroke="#333" stroke-width="0.6"/><rect x="9" y="9" width="2.5" height="5.5" fill="#c9c9c9" stroke="#999" stroke-width="0.6"/><rect x="11.5" y="5" width="3" height="9.5" fill="#fff" stroke="#333" stroke-width="0.6"/></svg>
<svg class="a" style="left:1040.8px;top:195.0px" width="15.5" height="15.5" viewBox="0 0 16 16"><path d="M1.5 1v13.5H15" fill="none" stroke="#333" stroke-width="1"/><rect x="2" y="2" width="2.5" height="3" fill="#fff" stroke="#333" stroke-width="0.6"/><rect x="4.5" y="2" width="9" height="3" fill="#5ba3e8" stroke="#2f6fbd" stroke-width="0.6"/><rect x="2" y="6.5" width="11.5" height="3" fill="#fff" stroke="#333" stroke-width="0.6"/><rect x="2" y="10.5" width="6" height="3" fill="#fff" stroke="#333" stroke-width="0.6"/><rect x="8" y="10.5" width="5.5" height="3" fill="#c9c9c9" stroke="#999" stroke-width="0.6"/></svg>
<svg class="a" style="left:1063.7px;top:195.0px" width="15.5" height="15.5" viewBox="0 0 16 16"><path d="M1.5 1v13.5H15" fill="none" stroke="#333" stroke-width="1"/><rect x="3" y="2" width="3" height="8" fill="#5ba3e8" stroke="#2f6fbd" stroke-width="0.6"/><rect x="3" y="10" width="3" height="4" fill="#fff" stroke="#333" stroke-width="0.6"/><rect x="8" y="2" width="3" height="5" fill="#fff" stroke="#333" stroke-width="0.6"/><rect x="8" y="7" width="3" height="7" fill="#fff" stroke="#333" stroke-width="0.6"/><rect x="11" y="5" width="2" height="9" fill="#c9c9c9"/></svg>
<svg class="a" style="left:950.0px;top:218.0px" width="15.5" height="15.5" viewBox="0 0 16 16"><path d="M1.5 1v13.5H15" fill="none" stroke="#333" stroke-width="1"/><path d="M2 10l4-4 3 3 3-4 3 3" fill="none" stroke="#333" stroke-width="1"/><path d="M2 12.5l4-4 3 2 3-5 3 2" fill="none" stroke="#2f6fbd" stroke-width="1"/></svg>
<svg class="a" style="left:972.9px;top:218.0px" width="15.5" height="15.5" viewBox="0 0 16 16"><path d="M1 14.5L6 5l5 9.5z" fill="#fff" stroke="#333" stroke-width="1"/><path d="M9 14.5l3.5-11 3 11z" fill="#c9c9c9" stroke="#888" stroke-width="0.8"/><path d="M1 14.5l5-6 4 4 2 2z" fill="#5ba3e8" stroke="#2f6fbd" stroke-width="0.8"/><path d="M1 14.5h14.5" stroke="#2f6fbd" stroke-width="1.2"/></svg>
<svg class="a" style="left:995.1px;top:218.0px" width="15.5" height="15.5" viewBox="0 0 16 16"><path d="M1.5 1v13.5H15" fill="none" stroke="#333" stroke-width="1"/><path d="M2 3l4 5 4-4 5 2v4l-5-2-4 4-4-5z" fill="#5ba3e8" stroke="#2f6fbd" stroke-width="0.8"/></svg>
<svg class="a" style="left:1018.0px;top:218.0px" width="15.5" height="15.5" viewBox="0 0 16 16"><path d="M1.5 1v13.5H15" fill="none" stroke="#333" stroke-width="1"/><path d="M2 2h13v5l-4 3-4-3-5 3z" fill="#5ba3e8" stroke="#2f6fbd" stroke-width="0.8"/></svg>
<svg class="a" style="left:1040.8px;top:218.0px" width="15.5" height="15.5" viewBox="0 0 16 16"><path d="M1.5 1v13.5H15" fill="none" stroke="#333" stroke-width="1"/><rect x="3" y="3" width="3" height="11.5" fill="#5ba3e8" stroke="#2f6fbd" stroke-width="0.6"/><rect x="7" y="6" width="3" height="8.5" fill="#fff" stroke="#333" stroke-width="0.6"/><rect x="11" y="4" width="3" height="10.5" fill="#c9c9c9" stroke="#999" stroke-width="0.6"/><path d="M2 13l4-5 4 3 5-6" fill="none" stroke="#333" stroke-width="0.9"/></svg>
<svg class="a" style="left:1063.7px;top:218.0px" width="15.5" height="15.5" viewBox="0 0 16 16"><path d="M1.5 1v13.5H15" fill="none" stroke="#333" stroke-width="1"/><rect x="3" y="8" width="3" height="6.5" fill="#5ba3e8" stroke="#2f6fbd" stroke-width="0.6"/><rect x="7" y="2" width="3" height="12.5" fill="#fff" stroke="#333" stroke-width="0.6"/><rect x="11" y="6" width="3" height="8.5" fill="#c9c9c9" stroke="#999" stroke-width="0.6"/><path d="M2 12l4-4 4 3 5-5" fill="none" stroke="#333" stroke-width="0.9"/></svg>
<svg class="a" style="left:950.0px;top:241.0px" width="15.5" height="15.5" viewBox="0 0 16 16"><path d="M1.5 1v13.5H15" fill="none" stroke="#333" stroke-width="1"/><path d="M2 3l4 4 4-1 5-4v4l-5 4-4 1-4-3z" fill="#999"/><path d="M2 8l4 3 4-1 5-2v3l-5 2-4 1-4-3z" fill="#5ba3e8" stroke="#2f6fbd" stroke-width="0.6"/><path d="M2 12h3M12 12h3" stroke="#e0a040" stroke-width="1.5"/></svg>
<svg class="a" style="left:972.9px;top:241.0px" width="15.5" height="15.5" viewBox="0 0 16 16"><path d="M1.5 1v13.5H15" fill="none" stroke="#333" stroke-width="1"/><rect x="3" y="7" width="3" height="7.5" fill="#fff" stroke="#333" stroke-width="0.7"/><rect x="6" y="5" width="3" height="6" fill="#fff" stroke="#333" stroke-width="0.7"/><rect x="9" y="2" width="2.5" height="6" fill="#5ba3e8" stroke="#2f6fbd" stroke-width="0.7"/><rect x="11.5" y="2" width="3" height="12.5" fill="#fff" stroke="#333" stroke-width="0.7"/></svg>
<svg class="a" style="left:995.1px;top:241.0px" width="15.5" height="15.5" viewBox="0 0 16 16"><rect x="1" y="1.5" width="14" height="3.5" rx="0.8" fill="#5ba3e8" stroke="#2f6fbd" stroke-width="0.8"/><rect x="3" y="6" width="10" height="3.5" fill="#5ba3e8" stroke="#2f6fbd" stroke-width="0.8"/><rect x="5" y="10.5" width="6" height="4" fill="#5ba3e8" stroke="#2f6fbd" stroke-width="0.8"/></svg>
<svg class="a" style="left:1018.0px;top:241.0px" width="15.5" height="15.5" viewBox="0 0 16 16"><path d="M1.5 1v13.5H15" fill="none" stroke="#333" stroke-width="1"/><rect x="3.5" y="4" width="2" height="2" fill="#5ba3e8"/><rect x="6" y="7" width="2" height="2" fill="#5ba3e8"/><rect x="12" y="2" width="2" height="2" fill="#333"/><rect x="3.5" y="11" width="2" height="2" fill="#333"/><rect x="11" y="9.5" width="2" height="2" fill="#5ba3e8"/><rect x="8.5" y="5" width="1.5" height="1.5" fill="#5ba3e8"/></svg>
<svg class="a" style="left:1040.8px;top:241.0px" width="15.5" height="15.5" viewBox="0 0 16 16"><circle cx="8" cy="8" r="6.8" fill="#fff" stroke="#333" stroke-width="1"/><path d="M8 8V1.2A6.8 6.8 0 0 1 12.5 13z" fill="#5ba3e8" stroke="#2f6fbd" stroke-width="0.8"/></svg>
<svg class="a" style="left:1063.7px;top:241.0px" width="15.5" height="15.5" viewBox="0 0 16 16"><circle cx="8" cy="8" r="5" fill="none" stroke="#5ba3e8" stroke-width="3"/><circle cx="8" cy="8" r="6.8" fill="none" stroke="#2f6fbd" stroke-width="0.8"/><circle cx="8" cy="8" r="3.2" fill="none" stroke="#2f6fbd" stroke-width="0.8"/><path d="M2 5l3 1.5" stroke="#fff" stroke-width="1.2"/></svg>
<svg class="a" style="left:950.0px;top:263.5px" width="15.5" height="15.5" viewBox="0 0 16 16"><rect x="1" y="1" width="14" height="14" fill="#fff" stroke="#333" stroke-width="1"/><rect x="1.5" y="1.5" width="6" height="6.5" fill="#5ba3e8"/><rect x="1.5" y="8" width="6" height="6.5" fill="#5ba3e8"/><path d="M7.5 1v14M1 8h6.5M7.5 6h7.5M11 6v9M7.5 10.5h7.5" stroke="#333" stroke-width="0.8"/></svg>
<svg class="a" style="left:972.9px;top:263.5px" width="15.5" height="15.5" viewBox="0 0 16 16"><circle cx="8" cy="7" r="5.5" fill="#fff" stroke="#333" stroke-width="1"/><path d="M6 4l3 1-1 2 2 1-1 2" fill="none" stroke="#2f9a6a" stroke-width="1.5"/><path d="M3 14.5h10M8 12.5v2" stroke="#333" stroke-width="1"/></svg>
<svg class="a" style="left:995.1px;top:263.5px" width="15.5" height="15.5" viewBox="0 0 16 16"><path d="M1 3l4-1 2 1 4-1 4 1v7l-3 4-4 1-4-3-3-3z" fill="#c9c9c9" stroke="#333" stroke-width="0.8"/><path d="M3 3l3 1v3l4-1 5 1v3l-3 4-3-1 2-3-4 1-2-2z" fill="#5ba3e8" stroke="#2f6fbd" stroke-width="0.6"/></svg>
<svg class="a" style="left:1018.0px;top:263.5px" width="15.5" height="15.5" viewBox="0 0 16 16"><path d="M8 1L2 13l6-2.5 6 4z" fill="#5ba3e8" stroke="#2f6fbd" stroke-width="0.6"/><path d="M8 1v9.5L14 14.5z" fill="#2f6fbd"/></svg>
<svg class="a" style="left:1040.8px;top:263.5px" width="15.5" height="15.5" viewBox="0 0 16 16"><path d="M1.5 11a6.5 6.5 0 0 1 13 0h-3a3.5 3.5 0 0 0-7 0z" fill="#5ba3e8" stroke="#333" stroke-width="0.8"/><path d="M2 11a6 6 0 0 1 5-5" fill="none" stroke="#fff" stroke-width="1.5"/><path d="M8 11l3-4" stroke="#333" stroke-width="1.3"/></svg>
<svg class="a" style="left:1063.7px;top:263.5px" width="15.5" height="15.5" viewBox="0 0 16 16"><rect x="1" y="2.5" width="14" height="11" fill="#fff" stroke="#333" stroke-width="0.9"/><text x="2.5" y="10.5" font-family="Liberation Sans" font-size="6.5" fill="#2f6fbd">123</text><path d="M2 12h12" stroke="#5ba3e8" stroke-width="0.6"/></svg>
<svg class="a" style="left:950.0px;top:286.2px" width="15.5" height="15.5" viewBox="0 0 16 16"><rect x="1" y="1.5" width="14" height="13" fill="#fff" stroke="#333" stroke-width="1"/><path d="M4 5h8M4 8h8M4 11h6" stroke="#2f6fbd" stroke-width="1.2"/><path d="M2.5 4v9" stroke="#c9c9c9" stroke-width="1"/></svg>
<svg class="a" style="left:972.9px;top:286.2px" width="15.5" height="15.5" viewBox="0 0 16 16"><rect x="1" y="2.5" width="14" height="11" fill="#fff" stroke="#333" stroke-width="0.9"/><path d="M3 9l2-4 2 4z" fill="#2f9a6a"/><path d="M8 5h4l-2 4z" fill="#e0a040"/><path d="M2 11h12" stroke="#c9c9c9" stroke-width="1"/></svg>
<svg class="a" style="left:995.1px;top:286.2px" width="15.5" height="15.5" viewBox="0 0 16 16"><rect x="1" y="1.5" width="13" height="12" fill="#fff" stroke="#333" stroke-width="0.9"/><path d="M1 4h13" stroke="#333" stroke-width="0.9"/><rect x="3" y="6" width="1.5" height="5" fill="#c9c9c9"/><path d="M8 9h7l-2.5 3v3h-2v-3z" fill="#fff" stroke="#333" stroke-width="0.9"/></svg>
<svg class="a" style="left:1018.0px;top:286.2px" width="15.5" height="15.5" viewBox="0 0 16 16"><rect x="1" y="1.5" width="14" height="13" fill="#fff" stroke="#333" stroke-width="0.9"/><path d="M1 4.5h14M1 8h14M1 11.3h14M5.6 4.5v10M10.3 4.5v10" stroke="#333" stroke-width="0.7"/><path d="M1 2.5h14" stroke="#888" stroke-width="1.6"/></svg>
<svg class="a" style="left:1040.8px;top:286.2px" width="15.5" height="15.5" viewBox="0 0 16 16"><rect x="1" y="1.5" width="14" height="13" fill="#fff" stroke="#333" stroke-width="0.9"/><rect x="10.3" y="4.5" width="4.7" height="10" fill="#5ba3e8"/><rect x="1" y="11.3" width="14" height="3.2" fill="#5ba3e8"/><path d="M1 4.5h14M1 8h14M1 11.3h14M5.6 4.5v10M10.3 4.5v10" stroke="#333" stroke-width="0.7"/><path d="M1 2.5h14" stroke="#888" stroke-width="1.6"/></svg>
<svg class="a" style="left:1063.7px;top:286.2px" width="15.5" height="15.5" viewBox="0 0 16 16"><text x="3" y="13.5" font-family="Liberation Sans" font-weight="bold" font-size="13" fill="#2f6fbd">R</text></svg>
<svg class="a" style="left:950.0px;top:309.0px" width="15.5" height="15.5" viewBox="0 0 16 16"><text x="-0.5" y="12.5" font-family="Liberation Sans" font-weight="bold" font-size="11" fill="#2f6fbd" letter-spacing="-0.5">Py</text></svg>
<svg class="a" style="left:972.9px;top:309.0px" width="15.5" height="15.5" viewBox="0 0 16 16"><path d="M1.5 1v13.5H15" fill="none" stroke="#333" stroke-width="1"/><path d="M3 4h8M3 7.5h7M3 11h5" stroke="#777" stroke-width="0.8"/><circle cx="12.5" cy="4" r="1.7" fill="#fff" stroke="#2f6fbd" stroke-width="1"/><circle cx="11" cy="7.5" r="1" fill="#777"/><circle cx="9" cy="11" r="1" fill="#777"/></svg>
<svg class="a" style="left:995.1px;top:309.0px" width="15.5" height="15.5" viewBox="0 0 16 16"><rect x="1" y="6" width="4" height="3" fill="#5ba3e8" stroke="#2f6fbd" stroke-width="0.6"/><path d="M5 7.5h3M8 3v10M8 3h2M8 7.5h2M8 13h2" stroke="#333" stroke-width="0.7"/><rect x="10" y="1" width="5" height="4" fill="#5ba3e8" stroke="#2f6fbd" stroke-width="0.6"/><rect x="10" y="5.5" width="5" height="4" fill="#5ba3e8" stroke="#2f6fbd" stroke-width="0.6"/><rect x="10" y="11" width="5" height="4" fill="#5ba3e8" stroke="#2f6fbd" stroke-width="0.6"/></svg>
<svg class="a" style="left:1018.0px;top:309.0px" width="15.5" height="15.5" viewBox="0 0 16 16"><path d="M1 2h14v9H7l-3 3.5V11H1z" fill="#fff" stroke="#2f6fbd" stroke-width="1"/></svg>
<svg class="a" style="left:1040.8px;top:309.0px" width="15.5" height="15.5" viewBox="0 0 16 16"><path d="M2.5 1h7l4 4v10h-11z" fill="#fff" stroke="#333" stroke-width="0.9"/><path d="M9.5 1v4h4" fill="none" stroke="#333" stroke-width="0.8"/><circle cx="5" cy="6.5" r="1" fill="#2f6fbd"/><path d="M7 7h4M5 10h6" stroke="#2f9a6a" stroke-width="0.7"/><path d="M7 8.5h4" stroke="#c9c9c9" stroke-width="0.7"/></svg>
<svg class="a" style="left:1063.7px;top:309.0px" width="15.5" height="15.5" viewBox="0 0 16 16"><path d="M4 1.5h8v5a4 4 0 0 1-8 0z" fill="#fff" stroke="#333" stroke-width="1"/><path d="M4 3H1.5v2a3 3 0 0 0 3 3M12 3h2.5v2a3 3 0 0 1-3 3" fill="none" stroke="#333" stroke-width="0.9"/><path d="M8 10.5v2" stroke="#333" stroke-width="1"/><rect x="4.5" y="12.5" width="7" height="2.5" fill="#5ba3e8" stroke="#2f6fbd" stroke-width="0.6"/><path d="M4 2h8" stroke="#5ba3e8" stroke-width="1.5"/></svg>
<svg class="a" style="left:950.0px;top:331.0px" width="15.5" height="15.5" viewBox="0 0 16 16"><path d="M2.5 1h7l4 4v10h-11z" fill="#fff" stroke="#333" stroke-width="1"/><path d="M5 13v-3M7.5 13V8M10 13V7" stroke="#333" stroke-width="1.5"/></svg>
<svg class="a" style="left:972.9px;top:331.0px" width="15.5" height="15.5" viewBox="0 0 16 16"><rect x="3" y="4" width="12" height="9.5" fill="#fff" stroke="#555" stroke-width="0.9"/><text x="4.5" y="11.5" font-family="Liberation Sans" font-size="6" fill="#5ba3e8">123</text><path d="M5 0L1.5 6h2.5l-2 5 5-6.5H4.5L6.5 0z" fill="#e0a040" stroke="#c07a20" stroke-width="0.4"/></svg>
<svg class="a" style="left:995.1px;top:331.0px" width="15.5" height="15.5" viewBox="0 0 16 16"><rect x="5" y="2" width="6" height="5" fill="#fff" stroke="#777" stroke-width="0.8"/><rect x="3" y="8" width="5" height="6" fill="#fff" stroke="#777" stroke-width="0.8"/><path d="M8 9h7l-2.5 3v3h-2v-3z" fill="#fff" stroke="#333" stroke-width="0.9"/><path d="M5 0L1.5 6h2.5l-2 5 5-6.5H4.5L6.5 0z" fill="#e0a040" stroke="#c07a20" stroke-width="0.4"/></svg>
<svg class="a" style="left:1018.0px;top:331.0px" width="15.5" height="15.5" viewBox="0 0 16 16"><rect x="2" y="3" width="11" height="11" fill="#fff" stroke="#666" stroke-width="0.8"/><path d="M5 11l2.5-6 2.5 6" fill="none" stroke="#5ba3e8" stroke-width="0.8"/><path d="M8 9h7l-2.5 3v3h-2v-3z" fill="#fff" stroke="#333" stroke-width="0.9"/><path d="M5 0L1.5 6h2.5l-2 5 5-6.5H4.5L6.5 0z" fill="#e0a040" stroke="#c07a20" stroke-width="0.4"/></svg>
<svg class="a" style="left:1040.8px;top:331.0px" width="15.5" height="15.5" viewBox="0 0 16 16"><rect x="2" y="3" width="11" height="11" fill="#fff" stroke="#666" stroke-width="0.8"/><path d="M6 6h5M6 9h3" stroke="#777" stroke-width="0.7"/><path d="M8 9h7l-2.5 3v3h-2v-3z" fill="#fff" stroke="#333" stroke-width="0.9"/><path d="M5 0L1.5 6h2.5l-2 5 5-6.5H4.5L6.5 0z" fill="#e0a040" stroke="#c07a20" stroke-width="0.4"/></svg>
<svg class="a" style="left:1063.7px;top:331.0px" width="15.5" height="15.5" viewBox="0 0 16 16"><path d="M3 2h12v10.5H3z" fill="#fff" stroke="#2f6fbd" stroke-width="1.4"/><path d="M6 11l2-4 3 1 2-4" fill="none" stroke="#5ba3e8" stroke-width="1.5"/><path d="M1 1h3.5v4L2.8 7 1 5z" fill="#c98a40"/><path d="M13 10l2 2-2 2-2-2z" fill="#c98a40"/></svg>
<svg class="a" style="left:950.0px;top:355.0px" width="15.5" height="15.5" viewBox="0 0 16 16"><path d="M8 1l7 7-7 7-7-7z" fill="#fff" stroke="#555" stroke-width="0.9"/><path d="M4.5 4.5l7 7M11.5 4.5l-7 7" stroke="#7b7fc8" stroke-width="0.8"/></svg>
<svg class="a" style="left:972.9px;top:355.0px" width="15.5" height="15.5" viewBox="0 0 16 16"><path d="M1 2h6.5L14 8l-6.5 6H1l6-6z" fill="#fff" stroke="#2f6fbd" stroke-width="1"/><path d="M4 12l6-5" stroke="#2f6fbd" stroke-width="0.9"/></svg>
<svg class="a" style="left:995.1px;top:355.0px" width="15.5" height="15.5" viewBox="0 0 16 16"><circle cx="4" cy="9" r="0.8" fill="#333"/><circle cx="8" cy="9" r="0.8" fill="#333"/><circle cx="12" cy="9" r="0.8" fill="#333"/></svg>
<svg class="a" style="left:950px;top:381px" width="14" height="15" viewBox="0 0 14 15"><rect width="14" height="15" fill="#4a4a4a"/><path d="M7 2L3 7v5M7 2l4 5v5" fill="none" stroke="#999" stroke-width="0.8"/><circle cx="3" cy="8" r="1.3" fill="#3aa0e0"/><circle cx="11" cy="8" r="1.3" fill="#3aa0e0"/><circle cx="3" cy="12" r="1.3" fill="#e0a040"/><circle cx="11" cy="12" r="1.3" fill="#e0a040"/></svg>
<!-- /vizicons -->
<div class="t" style="left:950px;top:413.3px;font-size:9.5px;color:#444">Valores</div>
<div class="a" style="left:941px;top:402px;width:146px;height:1px;background:#e3e3e3"></div>
<div class="a" style="left:945px;top:429px;width:137px;height:21px;border:1px dashed #cfcfcf;background:#fff;border-radius:2px"></div>
<div class="t" style="left:953px;top:436.3px;font-size:9.5px;color:#333">Agregar campos de datos a...</div>
<div class="t" style="left:950px;top:462.3px;font-size:9.5px;font-weight:bold;color:#444">Obtener detalles</div>
<div class="t" style="left:950px;top:482.3px;font-size:9.5px;color:#444">Entre varios informes</div>
<div class="a" style="left:1044px;top:480.5px;width:26px;height:12px;border:1px solid #555;border-radius:6px;background:#fff"></div>
<div class="a" style="left:1047.5px;top:483.5px;width:6px;height:6px;border-radius:3px;background:#444"></div>
<div class="t" style="left:950px;top:504.3px;font-size:9.5px;color:#444">Mantener todos los</div>
<div class="t" style="left:950px;top:517.3px;font-size:9.5px;color:#444">filtros</div>
<div class="a" style="left:1044px;top:502px;width:26px;height:13px;border-radius:7px;background:#1f7a63"></div>
<div class="a" style="left:1059px;top:505px;width:7px;height:7px;border-radius:4px;background:#fff"></div>
<svg class="a" style="left:1048px;top:504px" width="9" height="9" viewBox="0 0 9 9"><path d="M1.5 4.5l2 2 4-4" fill="none" stroke="#fff" stroke-width="1.5"/></svg>
<div class="a" style="left:945px;top:535px;width:137px;height:21px;border:1px dashed #cfcfcf;background:#fff;border-radius:2px"></div>
<div class="t" style="left:951px;top:542.3px;font-size:9.5px;color:#333">Agregue los campos de ob...</div>

<!-- datos pane -->
<div class="a" style="left:1087px;top:104px;width:1px;height:510px;background:#e0e0e0"></div>
<div class="a" style="left:1088px;top:104px;width:115px;height:510px;background:#f6f6f6"></div>
<div class="t" style="left:1094px;top:113.2px;font-size:12.3px;font-weight:bold;color:#252423;letter-spacing:-0.2px">Datos</div>
<div class="a" style="left:1092px;top:141px;width:120px;height:20px;border:1px solid #c8c8c8;border-bottom:1px solid #999;background:#fff;border-radius:3px"></div>
<svg class="a" style="left:1100px;top:144px" width="14" height="14" viewBox="0 0 14 14"><circle cx="5.5" cy="5.5" r="4" fill="none" stroke="#555" stroke-width="1.1"/><path d="M8.5 8.5L12.5 12.5" stroke="#555" stroke-width="1.2"/></svg>
<div class="t" style="left:1118px;top:145px;font-size:11px;color:#666">Buscar</div>
<svg class="a" style="left:1099px;top:172.0px" width="7" height="10" viewBox="0 0 7 10"><path d="M1.5 1l4 4-4 4" fill="none" stroke="#555" stroke-width="1"/></svg>
<svg class="a" style="left:1111px;top:172.0px" width="10" height="10" viewBox="0 0 10 10"><rect x="0.5" y="0.5" width="9" height="9" rx="1.5" fill="none" stroke="#444" stroke-width="1"/><path d="M0.5 3.5h9M0.5 6.5h9M3.5 0.5v9M6.5 0.5v9" stroke="#444" stroke-width="0.9"/></svg>
<div class="t" style="left:1126px;top:172.6px;font-size:10px;color:#3a3a3a">categories</div>
<svg class="a" style="left:1099px;top:191.5px" width="7" height="10" viewBox="0 0 7 10"><path d="M1.5 1l4 4-4 4" fill="none" stroke="#555" stroke-width="1"/></svg>
<svg class="a" style="left:1111px;top:191.5px" width="10" height="10" viewBox="0 0 10 10"><rect x="0.5" y="0.5" width="9" height="9" rx="1.5" fill="none" stroke="#444" stroke-width="1"/><path d="M0.5 3.5h9M0.5 6.5h9M3.5 0.5v9M6.5 0.5v9" stroke="#444" stroke-width="0.9"/></svg>
<div class="t" style="left:1126px;top:192.1px;font-size:10px;color:#3a3a3a">customers</div>
<svg class="a" style="left:1099px;top:211.0px" width="7" height="10" viewBox="0 0 7 10"><path d="M1.5 1l4 4-4 4" fill="none" stroke="#555" stroke-width="1"/></svg>
<svg class="a" style="left:1111px;top:211.0px" width="10" height="10" viewBox="0 0 10 10"><rect x="0.5" y="0.5" width="9" height="9" rx="1.5" fill="none" stroke="#444" stroke-width="1"/><path d="M0.5 3.5h9M0.5 6.5h9M3.5 0.5v9M6.5 0.5v9" stroke="#444" stroke-width="0.9"/></svg>
<div class="t" style="left:1126px;top:211.6px;font-size:10px;color:#3a3a3a">employees</div>
<svg class="a" style="left:1099px;top:230.5px" width="7" height="10" viewBox="0 0 7 10"><path d="M1.5 1l4 4-4 4" fill="none" stroke="#555" stroke-width="1"/></svg>
<svg class="a" style="left:1111px;top:230.5px" width="10" height="10" viewBox="0 0 10 10"><rect x="0.5" y="0.5" width="9" height="9" rx="1.5" fill="none" stroke="#444" stroke-width="1"/><path d="M0.5 3.5h9M0.5 6.5h9M3.5 0.5v9M6.5 0.5v9" stroke="#444" stroke-width="0.9"/></svg>
<div class="t" style="left:1126px;top:231.1px;font-size:10px;color:#3a3a3a">orders</div>
<svg class="a" style="left:1099px;top:250.0px" width="7" height="10" viewBox="0 0 7 10"><path d="M1.5 1l4 4-4 4" fill="none" stroke="#555" stroke-width="1"/></svg>
<svg class="a" style="left:1111px;top:250.0px" width="10" height="10" viewBox="0 0 10 10"><rect x="0.5" y="0.5" width="9" height="9" rx="1.5" fill="none" stroke="#444" stroke-width="1"/><path d="M0.5 3.5h9M0.5 6.5h9M3.5 0.5v9M6.5 0.5v9" stroke="#444" stroke-width="0.9"/></svg>
<div class="t" style="left:1126px;top:250.6px;font-size:10px;color:#3a3a3a">products</div>
<svg class="a" style="left:1099px;top:269.5px" width="7" height="10" viewBox="0 0 7 10"><path d="M1.5 1l4 4-4 4" fill="none" stroke="#555" stroke-width="1"/></svg>
<svg class="a" style="left:1111px;top:269.5px" width="10" height="10" viewBox="0 0 10 10"><rect x="0.5" y="0.5" width="9" height="9" rx="1.5" fill="none" stroke="#444" stroke-width="1"/><path d="M0.5 3.5h9M0.5 6.5h9M3.5 0.5v9M6.5 0.5v9" stroke="#444" stroke-width="0.9"/></svg>
<div class="t" style="left:1126px;top:270.1px;font-size:10px;color:#3a3a3a">shippers</div>

<!-- bottom tab bar -->
<div class="a" style="left:19px;top:587px;width:921px;height:27px;background:#eeeeee;border-top:1px solid #e8e8e8"></div>
<svg class="a" style="left:28px;top:593px" width="17" height="13" viewBox="0 0 17 13"><rect x="1.5" y="1" width="14" height="8.5" fill="none" stroke="#333" stroke-width="1.1"/><path d="M8.5 9.5v2.2M5 12h7" stroke="#333" stroke-width="1.1"/></svg>
<div class="a" style="left:28px;top:610.5px;width:18px;height:2px;background:#117865"></div>
<svg class="a" style="left:67px;top:592px" width="12" height="16" viewBox="0 0 12 16"><rect x="1" y="1" width="10" height="14" rx="1" fill="none" stroke="#333" stroke-width="1.1"/><path d="M5 12.5h2" stroke="#333" stroke-width="1"/></svg>
<svg class="a" style="left:94px;top:598px" width="30" height="10" viewBox="0 0 30 10"><path d="M5 1l-3 4 3 4M19 1l3 4-3 4" fill="none" stroke="#c4c4c4" stroke-width="1.1"/></svg>
<div class="a" style="left:122.3px;top:588px;width:1px;height:26px;background:#d6d6d6"></div>
<div class="a" style="left:189.5px;top:588px;width:1px;height:26px;background:#d6d6d6"></div>
<div class="a" style="left:292.5px;top:588px;width:1px;height:26px;background:#d6d6d6"></div>
<div class="a" style="left:395.5px;top:588px;width:1px;height:26px;background:#d6d6d6"></div>
<div class="a" style="left:495.0px;top:588px;width:1px;height:26px;background:#d6d6d6"></div>
<div class="a" style="left:581.0px;top:588px;width:1px;height:26px;background:#d6d6d6"></div>
<div class="t" style="left:139.5px;top:598px;font-size:9.5px;color:#333">Portada</div>
<svg class="a" style="left:207.5px;top:597px" width="10" height="10" viewBox="0 0 10 10"><g fill="#999"><circle cx="5" cy="5" r="3.3"/><rect x="4.1" y="0" width="1.8" height="2.2" transform="rotate(0 5 5)"/><rect x="4.1" y="0" width="1.8" height="2.2" transform="rotate(45 5 5)"/><rect x="4.1" y="0" width="1.8" height="2.2" transform="rotate(90 5 5)"/><rect x="4.1" y="0" width="1.8" height="2.2" transform="rotate(135 5 5)"/><rect x="4.1" y="0" width="1.8" height="2.2" transform="rotate(180 5 5)"/><rect x="4.1" y="0" width="1.8" height="2.2" transform="rotate(225 5 5)"/><rect x="4.1" y="0" width="1.8" height="2.2" transform="rotate(270 5 5)"/><rect x="4.1" y="0" width="1.8" height="2.2" transform="rotate(315 5 5)"/></g><circle cx="5" cy="5" r="1.4" fill="#eee"/></svg>
<div class="t" style="left:221.8px;top:597.5px;font-size:9.9px;color:#333;transform:scaleX(0.85);transform-origin:left">CATEGORIES</div>
<svg class="a" style="left:309px;top:597px" width="11" height="11" viewBox="0 0 10 10"><g fill="#e0a840"><circle cx="2.5" cy="1.8" r="1.6"/><circle cx="7.5" cy="1.8" r="1.6"/><rect x="0.6" y="3.6" width="3.8" height="6" rx="1"/><rect x="5.6" y="3.6" width="3.8" height="6" rx="1"/></g><path d="M0.8 6.5h3.4M5.8 6.5h3.4" stroke="#a67a20" stroke-width="0.6"/></svg>
<div class="t" style="left:324px;top:597.5px;font-size:9.9px;color:#333;transform:scaleX(0.85);transform-origin:left">CUSTOMERS</div>
<svg class="a" style="left:414px;top:597px" width="9" height="11" viewBox="0 0 8 10"><circle cx="4" cy="2.6" r="2.2" fill="#e0a840"/><path d="M0.3 9.5c0-3 1.5-4.5 3.7-4.5s3.7 1.5 3.7 4.5z" fill="#d99a3a"/><path d="M4 5l-0.6 4.5h1.2z" fill="#fff"/></svg>
<div class="t" style="left:428px;top:597.5px;font-size:9.9px;color:#333;transform:scaleX(0.85);transform-origin:left">EMPLOYEES</div>
<svg class="a" style="left:514px;top:597px" width="9" height="10" viewBox="0 0 9 10"><rect x="0.5" y="3" width="8" height="6.5" rx="1" fill="#3d6fb8"/><rect x="3.2" y="0.5" width="2.6" height="4" fill="#e58a3c"/></svg>
<div class="t" style="left:527.7px;top:597.5px;font-size:9.9px;color:#333;transform:scaleX(0.85);transform-origin:left">ORDERS</div>
<div class="a" style="left:582px;top:588px;width:97px;height:26px;background:#f8f8f8"></div>
<svg class="a" style="left:598px;top:597px" width="11" height="10" viewBox="0 0 11 10"><path d="M0.5 9.5h10" stroke="#555" stroke-width="0.9"/><path d="M2 9V3M4 9V5M6 9V1.5M8 9V4.5" stroke="#555" stroke-width="1.2"/></svg>
<div class="t" style="left:613.7px;top:597.5px;font-size:9.9px;color:#333;transform:scaleX(0.85);transform-origin:left">PRODUCTS</div>
<div class="a" style="left:581px;top:612.5px;width:98px;height:2px;background:#1d5c52"></div>
<div class="a" style="left:679.5px;top:588px;width:31.5px;height:26px;background:#1a7a5e"></div>
<svg class="a" style="left:689.5px;top:595.5px" width="11" height="11" viewBox="0 0 11 11"><path d="M5.5 0.5v10M0.5 5.5h10" stroke="#fff" stroke-width="2.2"/></svg>
<div class="a" style="left:0;top:104px;width:19px;height:510px;background:#f0f0f0;border-right:1px solid #e0e0e0"></div>
<svg class="a" style="left:0;top:111.5px" width="12" height="14" viewBox="0 0 12 14"><path d="M0 12.5h11" stroke="#333" stroke-width="1.2"/><rect x="0" y="6" width="2" height="6" fill="#333"/><rect x="3.5" y="8" width="2.5" height="4" fill="#888"/><rect x="7.5" y="2" width="3" height="10" fill="none" stroke="#333" stroke-width="1"/></svg>
<svg class="a" style="left:0;top:144px" width="12" height="14" viewBox="0 0 12 14"><rect x="-2" y="1.5" width="12" height="11" fill="none" stroke="#444" stroke-width="1"/><path d="M-2 5h12M-2 8.5h12M2.5 1.5v11M6 1.5v11" stroke="#444" stroke-width="0.9"/></svg>
<svg class="a" style="left:0;top:175px" width="13" height="16" viewBox="0 0 13 16"><rect x="-2" y="1" width="6" height="4" fill="none" stroke="#444" stroke-width="1"/><rect x="4" y="5.5" width="7" height="4" fill="none" stroke="#444" stroke-width="1"/><rect x="-2" y="10.5" width="6" height="4" fill="none" stroke="#444" stroke-width="1"/><path d="M2 5v5.5M4 7.5h-2" stroke="#444" stroke-width="0.9"/></svg>
<svg class="a" style="left:0;top:208px" width="12" height="16" viewBox="0 0 12 16"><path d="M-3 1h8l4 4v10h-12" fill="none" stroke="#555" stroke-width="1"/><text x="-1" y="13" font-family="Liberation Sans" font-size="5" font-weight="bold" fill="#444">AX</text></svg>
<svg class="a" style="left:0;top:241px" width="12" height="16" viewBox="0 0 12 16"><path d="M-3 1h8l4 4v10h-12" fill="none" stroke="#555" stroke-width="1"/><text x="-1" y="13" font-family="Liberation Sans" font-size="4.5" font-weight="bold" fill="#444">ML</text></svg>
<!-- watermark + vignette -->
<div class="a" style="left:0;top:540px;width:1203px;height:74px;background:linear-gradient(to bottom,rgba(0,0,0,0) 0%,rgba(0,0,0,0.03) 30%,rgba(0,0,0,0.095) 64%,rgba(0,0,0,0.29) 100%)"></div>
<svg class="a" style="left:0;top:0" width="1203" height="614" viewBox="0 0 1203 614">
<defs><mask id="wm" maskUnits="userSpaceOnUse" x="0" y="0" width="1203" height="700">
<rect x="0" y="0" width="1203" height="700" fill="black"/>
<g id="glyphs" fill="none" stroke="white" stroke-width="11.4" stroke-linecap="butt">
 <path d="M917.6 606.2A14.5 14.5 0 1 0 917.6 624.8"/>
 <path d="M925.6 580.3V640"/>
 <path d="M938 595.6V640"/>
 <path d="M977 580.3V640"/>
 <circle cx="962" cy="615.5" r="14.5"/>
 <path d="M987 612.0H1016A14.5 14.5 0 1 0 1011.8 625.8"/>
 <circle cx="1039.5" cy="615.5" r="14.5"/>
 <path d="M1096.5 605.5a14.5 14.5 0 1 0 0 20"/>
 <circle cx="1117.5" cy="615.5" r="14.5"/>
 <path d="M1141.5 595.6V640M1141.5 613.5a11 11 0 0 1 22 0V640M1163.5 613.5a11 11 0 0 1 22 0V640"/>
</g>
<circle cx="938" cy="587" r="5.5" fill="white"/>
<g fill="none" stroke="black" stroke-width="8.2">
 <path d="M917.6 606.2A14.5 14.5 0 1 0 917.6 624.8"/>
 <path d="M925.6 581.9V640"/>
 <path d="M938 597.2V640"/>
 <path d="M977 581.9V640"/>
 <circle cx="962" cy="615.5" r="14.5"/>
 <path d="M988.6 612.0H1016A14.5 14.5 0 1 0 1011.8 625.8"/>
 <circle cx="1039.5" cy="615.5" r="14.5"/>
 <path d="M1096.5 605.5a14.5 14.5 0 1 0 0 20"/>
 <circle cx="1117.5" cy="615.5" r="14.5"/>
 <path d="M1141.5 597.2V640M1141.5 613.5a11 11 0 0 1 22 0V640M1163.5 613.5a11 11 0 0 1 22 0V640"/>
</g>
<circle cx="938" cy="587" r="3.8" fill="black"/>
</mask></defs>
<rect x="0" y="560" width="1203" height="54" fill="#7a7a7a" mask="url(#wm)"/>
</svg>
</body></html>
